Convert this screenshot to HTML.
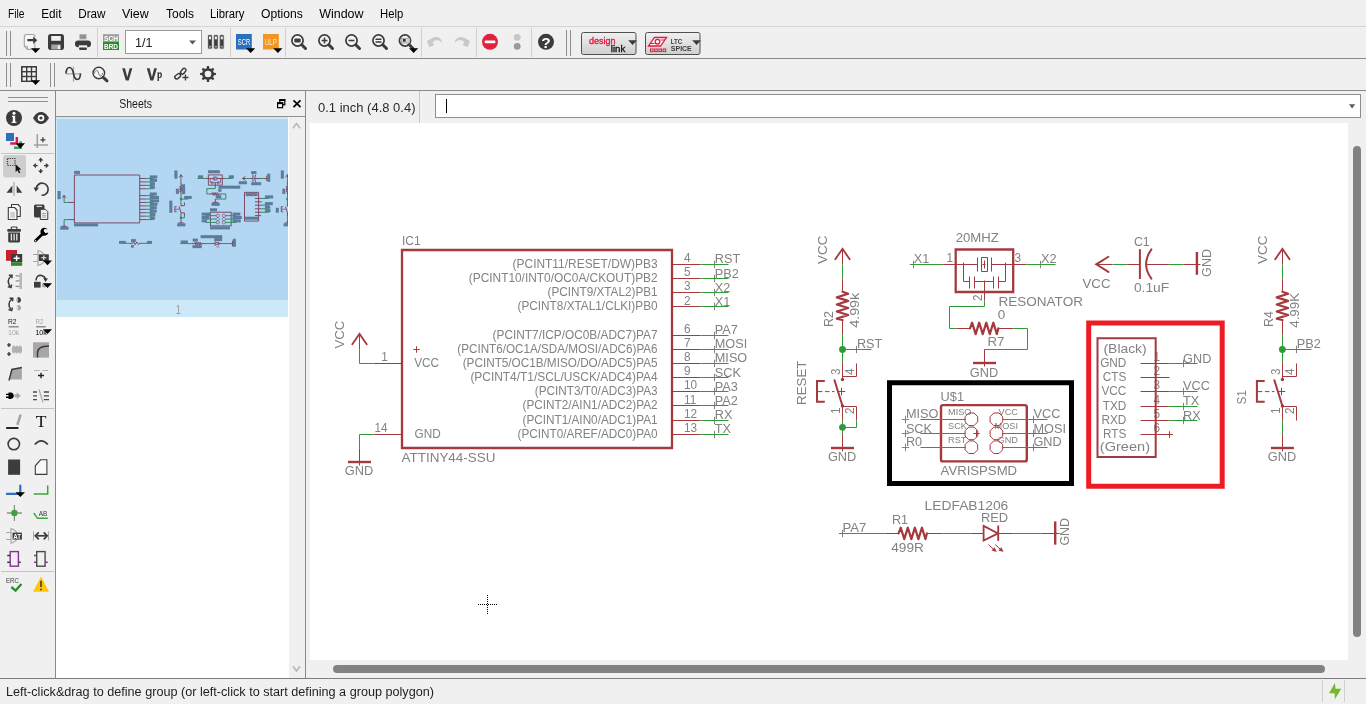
<!DOCTYPE html>
<html><head><meta charset="utf-8">
<style>
*{box-sizing:border-box;margin:0;padding:0}
html,body{width:1366px;height:704px;overflow:hidden;background:#f0f0f0;font-family:"Liberation Sans",sans-serif;}
.abs{position:absolute}
.hl{position:absolute;height:1px;left:0;width:1366px}
.vl{position:absolute;width:1px}
.menu{position:absolute;top:6px;font-size:13px;color:#000;white-space:nowrap;line-height:15px}
.ui{position:absolute;white-space:nowrap}
svg{position:absolute;overflow:visible;will-change:transform}
</style></head><body>
<!-- MENU -->
<!-- separators -->
<div class="hl" style="top:26px;background:#d4d4d4"></div>
<div class="hl" style="top:58px;background:#8a8a8a"></div>
<div class="hl" style="top:90px;background:#8a8a8a"></div>
<div class="hl" style="top:678px;background:#7e7e7e"></div>
<!-- left toolbar border -->
<div class="vl" style="left:55px;top:91px;height:587px;background:#8a8a8a"></div>
<!-- sheets panel -->
<div class="abs" style="left:56px;top:91px;width:249px;height:587px;background:#f0f0f0"></div>
<div class="vl" style="left:305px;top:91px;height:587px;background:#8a8a8a"></div>
<div class="hl" style="top:116px;left:56px;width:249px;background:#909090"></div>
<div class="abs" style="left:56px;top:117px;width:233px;height:561px;background:#fff"></div>
<div class="abs" style="left:56px;top:117px;width:232px;height:200px;background:#cde8f9"></div>
<div class="abs" style="left:57px;top:119px;width:231px;height:181px;background:#b3d7f3"></div>
<div class="abs" style="left:289px;top:117px;width:16px;height:561px;background:#f0f0f0"></div>
<!-- coord + cmd -->
<div class="vl" style="left:419px;top:91px;height:32px;background:#c8c8c8"></div>
<div class="abs" style="left:435px;top:94px;width:926px;height:24px;background:#fff;border:1px solid #8e8e8e"></div>
<div class="vl" style="left:446px;top:99px;height:14px;background:#000"></div>
<!-- canvas -->
<div class="abs" style="left:310px;top:123px;width:1038px;height:537px;background:#fff"></div>
<!-- scrollbars -->
<div class="abs" style="left:1353px;top:146px;width:8px;height:491px;background:#828282;border-radius:4px"></div>
<div class="abs" style="left:333px;top:665px;width:992px;height:8px;background:#828282;border-radius:4px"></div>
<!-- status -->
<div class="vl" style="left:1322px;top:680px;height:22px;background:#d0d0d0"></div>
<div class="vl" style="left:1344px;top:680px;height:22px;background:#d0d0d0"></div>
<svg id="chrome" style="left:0;top:0" width="1366" height="704" viewBox="0 0 1366 704" font-family="Liberation Sans, sans-serif">
<g font-size="12.5" fill="#000">
<text x="8" y="17.5" textLength="16.5" lengthAdjust="spacingAndGlyphs">File</text>
<text x="41.2" y="17.5" textLength="20.3" lengthAdjust="spacingAndGlyphs">Edit</text>
<text x="78.2" y="17.5" textLength="27.3" lengthAdjust="spacingAndGlyphs">Draw</text>
<text x="122" y="17.5" textLength="26.8" lengthAdjust="spacingAndGlyphs">View</text>
<text x="166" y="17.5" textLength="28.0" lengthAdjust="spacingAndGlyphs">Tools</text>
<text x="210" y="17.5" textLength="34.5" lengthAdjust="spacingAndGlyphs">Library</text>
<text x="261" y="17.5" textLength="41.8" lengthAdjust="spacingAndGlyphs">Options</text>
<text x="319.2" y="17.5" textLength="44.3" lengthAdjust="spacingAndGlyphs">Window</text>
<text x="380" y="17.5" textLength="23.2" lengthAdjust="spacingAndGlyphs">Help</text>
</g>
<g id="tb1">
<!-- grips -->
<path d="M6.5 31V56M10.5 31V56M566.5 30V56M570.5 30V56" stroke="#8e8e8e" stroke-width="1" fill="none"/>
<!-- light separators -->
<path d="M97.5 28V57M230.5 28V57M285.5 28V57M421.5 28V57M476.5 28V57M531.5 28V57" stroke="#cfcfcf" stroke-width="1" fill="none"/>
<!-- open icon -->
<path d="M26.800 34.500H32.800Q34.800 34.500 34.800 36.500V49.400H27.500L24.300 46.300V37Q24.300 34.500 26.800 34.500Z" fill="#f6f6f6" stroke="#a2a2a2" stroke-width="1.100"/>
<path d="M24.300 46.300H27.500V49.400" fill="none" stroke="#a2a2a2" stroke-width="0.900"/>
<rect x="33.800" y="37.400" width="2.400" height="5.800" fill="#f0f0f0"/>
<path d="M27.400 39.100H33.200V36.500L37.300 40.200L33.200 43.900V41.300H27.400Z" fill="#3c3c3c"/>
<path d="M31 48.200H40.200L35.600 53Z" fill="#000"/>
<!-- save icon -->
<rect x="48" y="34" width="16" height="16" rx="2.800" fill="#3c3c3c"/>
<rect x="51.200" y="36" width="9.600" height="4.800" fill="#f0f0f0"/>
<rect x="51.200" y="44.500" width="9.600" height="5" fill="#a8a4a4"/>
<rect x="57.800" y="45.400" width="2.100" height="3.600" fill="#f2f2f2"/>
<!-- print icon -->
<rect x="79.400" y="34.200" width="7.100" height="5.200" fill="#a6a6a6"/>
<path d="M80.200 35.800H85.700M80.200 37.600H85.700" stroke="#787878" stroke-width="0.800"/>
<rect x="75" y="40.400" width="16" height="6.800" rx="3.200" fill="#3c3c3c"/>
<rect x="78.800" y="45.300" width="8.400" height="2.600" fill="#f0f0f0"/>
<rect x="79.100" y="47.600" width="7.800" height="2.300" rx="1" fill="#3c3c3c"/>
<!-- SCH/BRD -->
<rect x="103" y="34.200" width="16" height="7.600" fill="#9c9c9c"/>
<rect x="103" y="41.800" width="16" height="8.200" fill="#2c8c2c"/>
<text x="104" y="41" font-size="7.4" font-weight="bold" fill="#fff" textLength="14" lengthAdjust="spacingAndGlyphs">SCH</text>
<text x="104" y="49.2" font-size="7.4" font-weight="bold" fill="#fff" textLength="14" lengthAdjust="spacingAndGlyphs">BRD</text>
<!-- combo -->
<rect x="125.5" y="30.5" width="76" height="23" fill="#fff" stroke="#9a9a9a"/>
<text x="135" y="47" font-size="13" fill="#222" textLength="17.5" lengthAdjust="spacingAndGlyphs">1/1</text>
<path d="M189 40.5H196L192.500 44.500Z" fill="#5a5a5a"/>
<!-- library books -->
<g fill="#3c3c3c" stroke="#a8a8a8" stroke-width="0.500">
<rect x="208" y="35" width="4" height="13.800" rx="0.800"/><rect x="213.900" y="35" width="4" height="13.800" rx="0.800"/><rect x="219.800" y="35" width="4" height="13.800" rx="0.800"/>
</g>
<g fill="#f4f4f4"><rect x="209" y="36.500" width="2" height="2.800"/><rect x="214.900" y="36.500" width="2" height="2.800"/><rect x="220.800" y="36.500" width="2" height="2.800"/></g>
<g fill="#9a9a9a"><rect x="209" y="45.800" width="2" height="1.800"/><rect x="214.900" y="45.800" width="2" height="1.800"/><rect x="220.800" y="45.800" width="2" height="1.800"/></g>
<!-- SCR -->
<rect x="236" y="34" width="15.800" height="15.500" fill="#2b70be"/>
<text x="237.800" y="45.100" font-size="9.200" fill="#fff" textLength="12.500" lengthAdjust="spacingAndGlyphs">SCR</text>
<path d="M246 48.200H255.200L250.600 53Z" fill="#000"/>
<!-- ULP -->
<rect x="263" y="34" width="15.800" height="15.500" fill="#f5941e"/>
<text x="264.800" y="45.100" font-size="9.200" fill="#ffe9c8" textLength="12" lengthAdjust="spacingAndGlyphs">ULP</text>
<path d="M273.300 48.200H282.500L277.900 53Z" fill="#000"/>
<!-- zoom icons -->
<g id="mag" fill="none" stroke="#3c3c3c">
<circle cx="297.500" cy="40.500" r="5.600" stroke-width="1.700" fill="#f6f6f6"/>
<path d="M301.800 44.800L305.500 48.500" stroke-width="3" stroke-linecap="round"/>
</g>
<rect x="294.300" y="38.500" width="6.400" height="4" rx="1" fill="#3c3c3c"/>
<use href="#mag" x="27"/><path d="M321.500 40.500H327.500M324.500 37.500V43.500" stroke="#3c3c3c" stroke-width="1.600"/>
<use href="#mag" x="54"/><path d="M348.500 40.500H354.500" stroke="#3c3c3c" stroke-width="1.600"/>
<use href="#mag" x="81"/><path d="M375.500 39.200H381.500M375.500 41.900H381.500" stroke="#3c3c3c" stroke-width="1.500"/>
<use href="#mag" x="107.500"/><rect x="401.300" y="38.200" width="8.600" height="4.800" fill="#d4d4d4" stroke="#8a8a8a" stroke-width="0.700"/><rect x="403" y="39" width="2.600" height="2.600" fill="#2a2a2a"/>
<path d="M409 48.200H418.200L413.600 53Z" fill="#000"/>
<!-- undo / redo -->
<path d="M427 40.800L430.400 39.300Q433 36.800 436.500 37Q441 37.500 442.500 42.900Q439.800 40 436.400 39.900Q434.300 40.200 432.600 42.300L434.300 44.900L429.200 47.300Z" fill="#c9c9c9"/>
<path d="M469.900 40.800L466.500 39.300Q463.900 36.800 460.400 37.000Q455.900 37.500 454.400 42.900Q457.100 40.000 460.500 39.900Q462.600 40.200 464.300 42.300L462.600 44.900L467.700 47.300Z" fill="#c9c9c9"/>
<!-- stop -->
<circle cx="490" cy="41.800" r="8" fill="#e2213d"/>
<rect x="484.700" y="40.400" width="10.600" height="2.800" rx="0.800" fill="#fff"/>
<!-- dots -->
<circle cx="517.200" cy="37.300" r="3.400" fill="#c6c6c6"/><circle cx="517.200" cy="46.300" r="3.400" fill="#9a9a9a"/>
<!-- help -->
<circle cx="546" cy="41.800" r="8" fill="#3c3c3c"/>
<text x="541.300" y="48.300" font-size="15.500" font-weight="bold" fill="#fff">?</text>
<!-- designlink button -->
<defs><linearGradient id="bg" x1="0" y1="0" x2="0" y2="1"><stop offset="0" stop-color="#f0f0f0"/><stop offset="1" stop-color="#cfcfcf"/></linearGradient></defs>
<rect x="581.500" y="32.500" width="54.500" height="22" rx="2" fill="url(#bg)" stroke="#505050"/>
<text x="589" y="43.500" font-size="9.800" fill="#e2173f" stroke="#e2173f" stroke-width="0.350" textLength="26.500" lengthAdjust="spacingAndGlyphs">design</text>
<text x="610.800" y="51.600" font-size="9.800" fill="#111" stroke="#111" stroke-width="0.350" textLength="14.500" lengthAdjust="spacingAndGlyphs">link</text>
<path d="M628.200 40.200H637L632.600 45Z" fill="#3c3c3c"/>
<!-- ltspice button -->
<rect x="645.500" y="32.500" width="54.500" height="22" rx="2" fill="url(#bg)" stroke="#505050"/>
<path d="M654.500 37.500H666.500L660.500 46H648.500Z" fill="#fff" stroke="#e2173f" stroke-width="1.300"/>
<circle cx="657.500" cy="41.700" r="2.300" fill="none" stroke="#e2173f" stroke-width="1.300"/>
<path d="M650 43.500H654.500M660.500 40H665" stroke="#e2173f" stroke-width="1.200"/>
<g fill="none" stroke="#e2173f" stroke-width="1"><rect x="650.500" y="49" width="2.600" height="2.600"/><rect x="654.700" y="49" width="2.600" height="2.600"/><rect x="658.900" y="49" width="2.600" height="2.600"/><rect x="663.100" y="49" width="2.600" height="2.600"/></g>
<text x="670.800" y="43.800" font-size="6.800" font-weight="bold" fill="#3c3c3c" textLength="11.500" lengthAdjust="spacingAndGlyphs">LTC</text>
<text x="670.800" y="51.200" font-size="6.800" font-weight="bold" fill="#3c3c3c" textLength="21" lengthAdjust="spacingAndGlyphs">SPICE</text>
<path d="M692.200 40.200H701L696.600 45Z" fill="#3c3c3c"/>
</g>
<!--TB1END-->
<g id="tb2">
<path d="M6.500 63V87M10.500 63V87M50.500 63V87M54.500 63V87" stroke="#8e8e8e" stroke-width="1" fill="none"/>
<!-- grid icon -->
<rect x="21" y="66" width="16" height="16" fill="#3c3c3c"/>
<g fill="#f0f0f0"><rect x="22.600" y="67.600" width="3.400" height="3.400"/><rect x="27.400" y="67.600" width="3.400" height="3.400"/><rect x="32.200" y="67.600" width="3.400" height="3.400"/>
<rect x="22.600" y="72.400" width="3.400" height="3.400"/><rect x="27.400" y="72.400" width="3.400" height="3.400"/><rect x="32.200" y="72.400" width="3.400" height="3.400"/>
<rect x="22.600" y="77.200" width="3.400" height="3.400"/><rect x="27.400" y="77.200" width="3.400" height="3.400"/><rect x="32.200" y="77.200" width="3.400" height="3.400"/></g>
<path d="M31 80.200H40.200L35.600 85Z" fill="#000"/>
<!-- sine -->
<path d="M73.500 66.500V82M66 73.800H81" stroke="#a8a8a8" stroke-width="1.200" fill="none"/>
<path d="M66 73.500C66.500 65.500 72 65.500 73.500 73.500C75 81.500 80 81.500 80.500 73.500" stroke="#3c3c3c" stroke-width="1.700" fill="none"/>
<!-- mag sine -->
<circle cx="98.800" cy="73" r="5.800" fill="#f4f4f4" stroke="#3c3c3c" stroke-width="1.400"/>
<path d="M94.500 73.500C95 69.500 97.800 69.500 98.600 73.200C99.400 77 102 77 102.700 73" stroke="#707070" stroke-width="1" fill="none"/>
<path d="M103.200 77.400L107 80.800" stroke="#3c3c3c" stroke-width="3" stroke-linecap="round"/>
<!-- V -->
<path d="M122.200 68.300H125L127.300 77.200L129.600 68.300H132.300L128.700 80.500H125.800Z" fill="#3c3c3c"/>
<!-- Vp -->
<path d="M146.800 68.300H149.600L151.900 77.200L154.200 68.300H156.900L153.300 80.500H150.400Z" fill="#3c3c3c"/>
<path d="M157.500 72.300H159V73Q159.600 72.200 160.500 72.300Q162 72.500 162 75.300Q162 78 160.400 78.100Q159.600 78.100 159 77.500V81H157.500ZM159 74V76.500Q159.400 77 159.800 77Q160.600 77 160.600 75.200Q160.600 73.500 159.800 73.500Q159.300 73.500 159 74Z" fill="#3c3c3c"/>
<!-- link plus -->
<g fill="none" stroke="#3c3c3c" stroke-width="1.500">
<rect x="-3.200" y="-1.800" width="6.400" height="3.600" rx="1.800" transform="translate(177.700 76.300) rotate(-38)"/>
<rect x="-3.200" y="-1.800" width="6.400" height="3.600" rx="1.800" transform="translate(183.300 71.200) rotate(-50)"/>
<path d="M179.800 74.600L181.500 73"/>
<path d="M182.500 77.500H188.400M185.450 74.600V80.400" stroke-width="1.300"/>
</g>
<path d="M213.87 72.74L215.93 72.94L215.93 75.06L213.87 75.26L213.04 77.25L214.36 78.85L212.85 80.36L211.25 79.04L209.26 79.87L209.06 81.93L206.94 81.93L206.74 79.87L204.75 79.04L203.15 80.36L201.64 78.85L202.96 77.25L202.13 75.26L200.07 75.06L200.07 72.94L202.13 72.74L202.96 70.75L201.64 69.15L203.15 67.64L204.75 68.96L206.74 68.13L206.94 66.07L209.06 66.07L209.26 68.13L211.25 68.96L212.85 67.64L214.36 69.15L213.04 70.75Z M211.3 74A3.3 3.3 0 1 0 204.7 74A3.3 3.3 0 1 0 211.3 74Z" fill="#3c3c3c" fill-rule="evenodd"/>
</g>
<!--TB2END-->
<g id="lefttb">
<path d="M8 97.500H48M8 101.500H48" stroke="#8e8e8e" stroke-width="1" fill="none"/>
<path d="M1 153.500H54M1 408.500H54M1 571.500H54" stroke="#c4c4c4" stroke-width="1" fill="none"/>
<!-- info -->
<circle cx="14" cy="118" r="8" fill="#3c3c3c"/>
<circle cx="14" cy="113.300" r="1.500" fill="#fff"/>
<path d="M12 115.800H15.200V121.800H16.400V123H11.600V121.800H12.800V117H12Z" fill="#fff"/>
<!-- eye -->
<path d="M33 118C35.500 113.500 38.500 112 41 112C43.500 112 46.500 113.500 49 118C46.500 122.500 43.500 124 41 124C38.500 124 35.500 122.500 33 118Z" fill="#3c3c3c"/>
<circle cx="41" cy="118" r="3.300" fill="#fff"/><circle cx="41" cy="118" r="1.600" fill="#3c3c3c"/>
<!-- layers -->
<path d="M14 146.500H21.900V141.200H19.400V146.500ZM14 146.500V149H21.900V146.500Z" fill="#2ca85c"/>
<path d="M10.200 142.200H18.100V137H15.600V142.200ZM10.200 142.200V144.800H18.100V142.200Z" fill="#d81b60"/>
<rect x="6" y="133" width="8" height="8" fill="#2b70be"/>
<path d="M15.600 143.200H25L20.300 148.400Z" fill="#000"/>
<!-- mark -->
<path d="M37.300 134V148M34 145H48" stroke="#a0a0a0" stroke-width="1.500" fill="none"/>
<path d="M40.400 139.800H45.400M42.900 137.300V142.300" stroke="#3c3c3c" stroke-width="1.300" fill="none"/>
<!-- group (selected) -->
<rect x="3" y="155" width="23" height="22.600" rx="2.500" fill="#cdcdcd"/>
<rect x="7.500" y="158.500" width="7.500" height="7" fill="none" stroke="#3c3c3c" stroke-width="1.200" stroke-dasharray="1.200 1.100"/>
<path d="M15.600 164.200V172L17.500 170.300L19 173.300L20.300 172.700L18.900 169.700L21.300 169.500Z" fill="#111"/>
<!-- move -->
<g fill="#3c3c3c"><path d="M40.700 157.600L43.300 160.600H38.100Z"/><path d="M40.700 173.600L43.300 170.600H38.100Z"/><path d="M32.900 165.600L35.900 163V168.200Z"/><path d="M48.900 165.600L45.900 163V168.200Z"/>
<rect x="40" y="160" width="1.400" height="2.200"/><rect x="40" y="169" width="1.400" height="2.200"/><rect x="35.500" y="164.900" width="2.200" height="1.400"/><rect x="44" y="164.900" width="2.200" height="1.400"/></g>
<!-- mirror -->
<path d="M14 182V196" stroke="#b4b4b4" stroke-width="1.500"/>
<path d="M12.300 185.500V192.700H6.500ZM16.700 185.500V192.700H22.300Z" fill="#3c3c3c"/>
<!-- rotate -->
<path d="M36.200 188.500A6 6 0 1 1 41.600 195.200" fill="none" stroke="#3c3c3c" stroke-width="1.700"/>
<path d="M33.600 187.500L39 187.800L35.800 191.800Z" fill="#3c3c3c"/>
<!-- copy -->
<path d="M11.500 204.500H18L20.300 206.800V216.500H11.500Z" fill="#f6f6f6" stroke="#3c3c3c" stroke-width="1.100" stroke-linejoin="round"/>
<path d="M8.300 207.500H14.500L17 210V219.500H8.300Z" fill="#f6f6f6" stroke="#3c3c3c" stroke-width="1.100" stroke-linejoin="round"/>
<path d="M10.300 213H15M10.300 215H15M10.300 217H15" stroke="#a0a0a0" stroke-width="0.900"/>
<!-- paste -->
<rect x="34" y="204.500" width="10.500" height="13" rx="1.500" fill="#3c3c3c"/>
<rect x="36.500" y="205.800" width="5.500" height="1.300" fill="#d0d0d0"/>
<path d="M40.300 209.300H45.500L47.800 211.600V219.500H40.300Z" fill="#ededed" stroke="#3c3c3c" stroke-width="1"/>
<path d="M42 213.500H46M42 215.300H46M42 217.100H46" stroke="#a0a0a0" stroke-width="0.900"/>
<!-- trash -->
<rect x="11.300" y="227" width="5.600" height="2.600" rx="0.800" fill="none" stroke="#3c3c3c" stroke-width="1.200"/>
<rect x="7.200" y="229" width="13.800" height="2.800" rx="1" fill="#3c3c3c"/>
<path d="M8.200 232.600H20V241Q20 242.600 18.400 242.600H9.800Q8.200 242.600 8.200 241Z" fill="#3c3c3c"/>
<path d="M11.400 233.800V240.600M14.100 233.800V240.600M16.800 233.800V240.600" stroke="#e8e8e8" stroke-width="1.300"/>
<!-- wrench -->
<path d="M35.500 240.800L43.500 233" stroke="#000" stroke-width="2.800" stroke-linecap="round"/>
<path d="M47.600 229.400A4 4 0 1 0 48.300 232.600L45.300 233.200L43.600 231.300L44.600 228.800Z" fill="#000"/>
<circle cx="35.600" cy="240.700" r="0.700" fill="#f0f0f0"/>
<!-- add part -->
<rect x="6" y="250" width="11" height="10.800" fill="#c8202f"/>
<rect x="11" y="254" width="11.200" height="8.300" fill="#3c3c3c"/>
<rect x="11" y="262.300" width="11.200" height="3.500" fill="#2c8c2c"/>
<path d="M13.600 258.200H19.600M16.600 255.400V261" stroke="#fff" stroke-width="1.500"/>
<!-- add gate -->
<path d="M33 254.500H38M33 261.500H38M38 250.500V265.500Q45 263.500 45 258Q45 252.500 38 250.500Z" fill="none" stroke="#a4a4a4" stroke-width="1.200"/>
<rect x="38.800" y="254.300" width="10" height="6.700" fill="#3c3c3c"/>
<path d="M41.300 257.700H46.300M43.800 255.400V260" stroke="#d8d8d8" stroke-width="1.300"/>
<path d="M43 260.600H52L47.500 265.200Z" fill="#000"/>
<!-- replace -->
<g fill="none" stroke="#3c3c3c" stroke-width="1.500">
<path d="M11.500 275.500Q5.500 281 10.500 286.800"/><path d="M8.800 275.300H12V278.300"/><path d="M7.800 286.500L11 287.600L11.700 284.500"/></g>
<rect x="19.400" y="273" width="2.600" height="16" fill="#b8b8b8"/>
<path d="M15.600 275.800H19.400M15.600 280.800H19.400M15.600 286.400H19.400" stroke="#8c8c8c" stroke-width="1.200"/>
<!-- lock/rotate -->
<rect x="34" y="281.800" width="6.600" height="5.800" fill="#3c3c3c"/>
<path d="M36 280.500Q36.500 274.500 41.500 275.500Q45 276.300 45.600 279.500" fill="none" stroke="#3c3c3c" stroke-width="1.600"/>
<path d="M43.200 278L48 278.500L45.500 282Z" fill="#3c3c3c"/>
<circle cx="44.300" cy="285.200" r="2.400" fill="#a0a0a0"/>
<path d="M43 283.200H52L47.500 288Z" fill="#000"/>
<!-- replace2 -->
<g fill="none" stroke="#3c3c3c" stroke-width="1.500">
<path d="M12.200 298.500Q6.200 304 11.200 309.800"/><path d="M9.500 298.300H12.700V301.300"/><path d="M8.500 309.500L11.700 310.600L12.400 307.500"/></g>
<path d="M17.500 297.200A2.800 2.800 0 1 1 17.500 302.600Q19 300 17.500 297.200Z" fill="#3c3c3c"/>
<path d="M17.500 305A2.800 2.800 0 1 1 17.500 310.400Q19 307.800 17.500 305Z" fill="#a4a4a4"/>
<path d="M16.500 299H17.800M16.500 301H17.800" stroke="#3c3c3c" stroke-width="0.800"/><path d="M16.500 306.800H17.800M16.500 308.800H17.800" stroke="#a4a4a4" stroke-width="0.800"/>
<!-- name -->
<text x="8" y="324.300" font-size="7" fill="#222" textLength="8.500" lengthAdjust="spacingAndGlyphs">R2</text>
<rect x="8.700" y="326" width="10" height="1.500" fill="#8c8c8c"/>
<text x="8" y="334.500" font-size="7" fill="#a8a8a8" textLength="11.400" lengthAdjust="spacingAndGlyphs">10k</text>
<!-- value -->
<text x="35.400" y="324.300" font-size="7" fill="#a8a8a8" textLength="8" lengthAdjust="spacingAndGlyphs">R2</text>
<rect x="36.200" y="326" width="9.500" height="1.500" fill="#8c8c8c"/>
<text x="35.400" y="334.500" font-size="7" fill="#000" textLength="11.400" lengthAdjust="spacingAndGlyphs">10k</text>
<path d="M43 329.300H52L47.500 334Z" fill="#000"/>
<!-- smash -->
<path d="M12 346.500H13.200V345.500H14.700V346.500H16.200V345.500H17.700V346.500H19.200V345.500H20.700V346.500H22V352.500H20.700V353.500H19.200V352.500H17.700V353.500H16.200V352.500H14.700V353.500H13.200V352.500H12Z" fill="#b4b0b0"/>
<path d="M7 345H11M9 343V347M7 354H11M9 352V356" stroke="#222" stroke-width="1.200"/>
<!-- miter -->
<rect x="33" y="342.300" width="16" height="15.300" fill="#aaa6a6"/>
<path d="M37.500 357.600V353Q37.500 346 49 346" fill="none" stroke="#3c3c3c" stroke-width="1.500"/>
<!-- split -->
<path d="M11.900 369.500L21.900 367.600V379.500H9Z" fill="#aaa6a6"/>
<path d="M9 380.500L11.900 369.500L21.900 367.600" fill="none" stroke="#3c3c3c" stroke-width="1.500"/>
<!-- invoke -->
<path d="M34 370.500H39.700M42.500 370.500H48" stroke="#b4b4b4" stroke-width="1.200"/>
<path d="M38 375.500H44M41 372.700V378.300" stroke="#222" stroke-width="1.400"/>
<!-- pinswap -->
<path d="M6 393.700H8.500V392.600H10.800Q13.600 393 13.800 395.800Q13.600 398.600 10.800 399H8.500V397.900H6V396.500H8.500V395.100H6Z" fill="#000"/>
<path d="M14.500 394.300H16.800V392.300L20.800 395.800L16.800 399.300V397.300H14.500Z" fill="#a8a8a8"/>
<!-- gateswap -->
<path d="M33 392H37M33 395.800H37M33 399.700H37M43.800 392H49M43.800 395.800H49M43.800 399.700H49" stroke="#4a4a4a" stroke-width="1.300"/>
<path d="M39 389.300L43 402.600" stroke="#a8a8a8" stroke-width="1.200"/>
<!-- line -->
<path d="M6.200 428H18.500" stroke="#000" stroke-width="1.700"/>
<path d="M17.400 424.800L20.600 414.600" stroke="#a4a4a4" stroke-width="2.600"/>
<!-- T -->
<text x="35.800" y="426.800" font-family="Liberation Serif, serif" font-size="17.500" fill="#111">T</text>
<!-- circle -->
<circle cx="13.800" cy="444.100" r="5.700" fill="none" stroke="#3c3c3c" stroke-width="1.600"/>
<!-- arc -->
<path d="M34.800 444.500Q41.300 437.200 47.800 444.500" fill="none" stroke="#3c3c3c" stroke-width="1.800"/>
<!-- rect -->
<rect x="8.100" y="459.500" width="12" height="15.300" fill="#3c3c3c"/>
<!-- polygon -->
<path d="M35.300 474.400V465.800L40.600 459.800H46.900V474.400Z" fill="#f8f8f8" stroke="#3c3c3c" stroke-width="1.100"/>
<!-- bus -->
<path d="M6.900 493.900H18M20.300 485.700V492.500" stroke="#2b70be" stroke-width="2.200" stroke-linecap="round"/>
<path d="M15.600 492.300H25L20.300 497Z" fill="#000"/>
<!-- net -->
<path d="M33.800 493.900H47.700V485.500" fill="none" stroke="#3aa53a" stroke-width="1.500"/>
<!-- junction -->
<path d="M6.900 513H21.900M14.400 505V521" stroke="#8e8e8e" stroke-width="1.300"/>
<circle cx="14.400" cy="513" r="3.200" fill="#3aa53a"/>
<!-- label -->
<text x="38.700" y="515.600" font-size="7.200" fill="#333" textLength="8.600" lengthAdjust="spacingAndGlyphs">AB</text>
<path d="M33.800 513L37.500 518.300H47.800" fill="none" stroke="#3aa53a" stroke-width="1.400"/>
<!-- attribute -->
<path d="M6.200 532.500H11M6.200 539.500H11M11 528.500V543.300Q17.500 541.500 17.500 536Q17.500 530.500 11 528.500Z" fill="none" stroke="#a4a4a4" stroke-width="1.100"/>
<rect x="12.500" y="532.600" width="9.400" height="7" fill="#3c3c3c"/>
<text x="13.300" y="538.800" font-size="6.500" font-weight="bold" fill="#fff" textLength="7.800" lengthAdjust="spacingAndGlyphs">AT</text>
<!-- dimension -->
<path d="M33.500 531.400V540.500M48.500 531.400V540.500" stroke="#a8a8a8" stroke-width="1"/>
<path d="M36.500 535.800H46" stroke="#3c3c3c" stroke-width="1.700"/>
<path d="M38.800 532.300L35.300 535.800L38.800 539.300M43.700 532.300L47.200 535.800L43.700 539.300" fill="none" stroke="#3c3c3c" stroke-width="1.700"/>
<!-- module -->
<rect x="10.200" y="551.600" width="8.200" height="14.600" fill="none" stroke="#8a2d9a" stroke-width="1.400"/>
<path d="M7.200 555.500H10M7.200 562.300H10M18.600 562.300H20.700" stroke="#3c3c3c" stroke-width="1.500"/>
<!-- port -->
<rect x="36.700" y="551.600" width="8.400" height="14.600" fill="none" stroke="#4a4a4a" stroke-width="1.400"/>
<path d="M34 555.500H36.300M34 562.300H36.300M45.500 562.300H47.800" stroke="#8a2d9a" stroke-width="1.500"/>
<!-- ERC -->
<text x="6" y="582.800" font-size="8" fill="#3c3c3c" textLength="12.800" lengthAdjust="spacingAndGlyphs">ERC</text>
<path d="M11.300 587L15.600 590.600L21.400 584" fill="none" stroke="#2c8c2c" stroke-width="2.300"/>
<!-- warn -->
<path d="M41 576.400L49 591.800H33.100Z" fill="#ffc60a"/>
<path d="M41 580.700V587" stroke="#3c3c3c" stroke-width="1.600"/><circle cx="41" cy="589.500" r="0.900" fill="#3c3c3c"/>
</g>
<!--LEFTEND-->
<g id="thumb" clip-path="url(#thclip)"><defs><clipPath id="thclip"><rect x="57" y="118" width="231" height="182"/></clipPath></defs>
<path d="M74.38 175L139.72 175L139.72 222.92L74.38 222.92Z" stroke="#7c4a68" stroke-width="1.0" fill="none"/>
<path d="M139.72 178.48L146.57 178.48" stroke="#7c4a68" stroke-width="1.0" fill="none"/>
<path d="M146.57 178.48L153.45 178.48" stroke="#2e8f5c" stroke-width="1.0" fill="none"/>
<rect x="149.78" y="175.37" width="7.55" height="3.07" fill="#5b7d9b"/>
<path d="M139.72 181.91L146.57 181.91" stroke="#7c4a68" stroke-width="1.0" fill="none"/>
<path d="M146.57 181.91L153.45 181.91" stroke="#2e8f5c" stroke-width="1.0" fill="none"/>
<rect x="149.78" y="178.8" width="7.21" height="3.07" fill="#5b7d9b"/>
<path d="M139.72 185.33L146.57 185.33" stroke="#7c4a68" stroke-width="1.0" fill="none"/>
<path d="M146.57 185.33L153.45 185.33" stroke="#2e8f5c" stroke-width="1.0" fill="none"/>
<rect x="149.78" y="182.22" width="5.16" height="3.07" fill="#5b7d9b"/>
<path d="M139.72 188.76L146.57 188.76" stroke="#7c4a68" stroke-width="1.0" fill="none"/>
<path d="M146.57 188.76L153.45 188.76" stroke="#2e8f5c" stroke-width="1.0" fill="none"/>
<rect x="149.78" y="185.65" width="5.16" height="3.07" fill="#5b7d9b"/>
<path d="M139.72 195.61L146.57 195.61" stroke="#7c4a68" stroke-width="1.0" fill="none"/>
<path d="M146.57 195.61L153.45 195.61" stroke="#2e8f5c" stroke-width="1.0" fill="none"/>
<rect x="149.78" y="192.49" width="6.98" height="3.07" fill="#5b7d9b"/>
<path d="M139.72 199.03L146.57 199.03" stroke="#7c4a68" stroke-width="1.0" fill="none"/>
<path d="M146.57 199.03L153.45 199.03" stroke="#2e8f5c" stroke-width="1.0" fill="none"/>
<rect x="149.78" y="195.92" width="9.25" height="3.07" fill="#5b7d9b"/>
<path d="M139.72 202.45L146.57 202.45" stroke="#7c4a68" stroke-width="1.0" fill="none"/>
<path d="M146.57 202.45L153.45 202.45" stroke="#2e8f5c" stroke-width="1.0" fill="none"/>
<rect x="149.78" y="199.34" width="9.25" height="3.07" fill="#5b7d9b"/>
<path d="M139.72 205.88L146.57 205.88" stroke="#7c4a68" stroke-width="1.0" fill="none"/>
<path d="M146.57 205.88L153.45 205.88" stroke="#2e8f5c" stroke-width="1.0" fill="none"/>
<rect x="149.78" y="202.77" width="7.72" height="3.07" fill="#5b7d9b"/>
<path d="M139.72 209.3L146.57 209.3" stroke="#7c4a68" stroke-width="1.0" fill="none"/>
<path d="M146.57 209.3L153.45 209.3" stroke="#2e8f5c" stroke-width="1.0" fill="none"/>
<rect x="149.78" y="206.19" width="6.98" height="3.07" fill="#5b7d9b"/>
<path d="M139.72 212.73L146.57 212.73" stroke="#7c4a68" stroke-width="1.0" fill="none"/>
<path d="M146.57 212.73L153.45 212.73" stroke="#2e8f5c" stroke-width="1.0" fill="none"/>
<rect x="149.78" y="209.62" width="6.98" height="3.07" fill="#5b7d9b"/>
<path d="M139.72 216.15L146.57 216.15" stroke="#7c4a68" stroke-width="1.0" fill="none"/>
<path d="M146.57 216.15L153.45 216.15" stroke="#2e8f5c" stroke-width="1.0" fill="none"/>
<rect x="149.78" y="213.04" width="5.67" height="3.07" fill="#5b7d9b"/>
<path d="M139.72 219.58L146.57 219.58" stroke="#7c4a68" stroke-width="1.0" fill="none"/>
<path d="M146.57 219.58L153.45 219.58" stroke="#2e8f5c" stroke-width="1.0" fill="none"/>
<rect x="149.78" y="216.46" width="5.33" height="3.07" fill="#5b7d9b"/>
<path d="M67.54 202.44L74.38 202.44" stroke="#7c4a68" stroke-width="1.0" fill="none"/>
<path d="M64.1 202.44L67.54 202.44" stroke="#2e8f5c" stroke-width="1.0" fill="none"/>
<path d="M67.54 219.6L74.38 219.6" stroke="#7c4a68" stroke-width="1.0" fill="none"/>
<path d="M64.1 219.6L67.54 219.6" stroke="#2e8f5c" stroke-width="1.0" fill="none"/>
<rect x="74.08" y="170.84" width="5.93" height="3.05" fill="#5b7d9b"/>
<rect x="73.96" y="223.35" width="24.15" height="3.05" fill="#5b7d9b"/>
<path d="M64.1 202.44L64.1 199.05" stroke="#2e8f5c" stroke-width="1.0" fill="none"/>
<path d="M64.1 199.05L64.1 195.09" stroke="#7c4a68" stroke-width="1.0" fill="none"/>
<path d="M62.36 197.8L64.1 195.28L65.84 197.8" stroke="#7c4a68" stroke-width="1.0" fill="none"/>
<rect x="57.59" y="191.03" width="3.05" height="8.13" fill="#5b7d9b"/>
<path d="M64.1 219.6L64.1 223.11" stroke="#2e8f5c" stroke-width="1.0" fill="none"/>
<path d="M64.1 223.11L64.1 227.03" stroke="#7c4a68" stroke-width="1.0" fill="none"/>
<path d="M61.32 226.3L66.88 226.3" stroke="#7c4a68" stroke-width="1.0" fill="none"/>
<rect x="60.22" y="226.65" width="8.3" height="3.05" fill="#5b7d9b"/>
<path d="M180.98 178.51L180.98 174.52" stroke="#7c4a68" stroke-width="1.0" fill="none"/>
<path d="M179.24 177.23L180.98 174.71L182.73 177.23" stroke="#7c4a68" stroke-width="1.0" fill="none"/>
<path d="M180.98 178.51L180.98 181.95" stroke="#2e8f5c" stroke-width="1.0" fill="none"/>
<path d="M180.98 181.95L180.98 185.09" stroke="#7c4a68" stroke-width="1.0" fill="none"/>
<path d="M180.98 185.09L182.36 185.61L179.61 186.46L182.36 187.32L179.61 188.17L182.36 189.03L179.61 189.89L182.36 190.74L179.61 191.6L180.98 191.94" stroke="#7c4a68" stroke-width="1.0" fill="none"/>
<path d="M180.98 191.94L180.98 195.52" stroke="#7c4a68" stroke-width="1.0" fill="none"/>
<path d="M180.98 195.52L180.98 202.27" stroke="#2e8f5c" stroke-width="1.0" fill="none"/>
<circle cx="180.98" cy="199.08" r="1.3" fill="#2e8f5c"/>
<rect x="174.36" y="170.42" width="3.05" height="8.25" fill="#5b7d9b"/>
<rect x="175.88" y="188.66" width="3.05" height="5.25" fill="#5b7d9b"/>
<rect x="182.05" y="184.26" width="3.05" height="9.87" fill="#5b7d9b"/>
<path d="M180.98 199.08L187.91 199.08" stroke="#2e8f5c" stroke-width="1.0" fill="none"/>
<rect x="184.17" y="195.94" width="7.55" height="3.07" fill="#5b7d9b"/>
<path d="M180.98 202.27L180.98 206.34" stroke="#7c4a68" stroke-width="1.0" fill="none"/>
<path d="M184.4 202.39L184.4 205.69L180.98 205.69" stroke="#7c4a68" stroke-width="1.0" fill="none"/>
<path d="M179.05 206.51L180.98 212.75" stroke="#7c4a68" stroke-width="1.0" fill="none"/>
<path d="M180.98 212.75L180.98 216.14" stroke="#7c4a68" stroke-width="1.0" fill="none"/>
<path d="M180.98 212.85L184.4 212.85L184.4 216.14" stroke="#7c4a68" stroke-width="1.0" fill="none"/>
<path d="M176.7 206.7L174.81 206.7L174.81 211.74L176.7 211.74" stroke="#7c4a68" stroke-width="1.0" fill="none"/>
<path d="M174.81 209.27H179.05" stroke="#7c4a68" stroke-width="0.8" fill="none"/>
<rect x="169.3" y="200.64" width="3.05" height="12.17" fill="#5b7d9b"/>
<path d="M180.98 216.14L180.98 219.53" stroke="#2e8f5c" stroke-width="1.0" fill="none"/>
<path d="M184.4 216.14L184.4 217.91L180.98 217.91" stroke="#2e8f5c" stroke-width="1.0" fill="none"/>
<circle cx="180.98" cy="217.91" r="1.3" fill="#2e8f5c"/>
<path d="M180.98 219.53L180.98 223.64" stroke="#7c4a68" stroke-width="1.0" fill="none"/>
<path d="M178.2 222.92L183.77 222.92" stroke="#7c4a68" stroke-width="1.0" fill="none"/>
<rect x="177.15" y="223.31" width="8.27" height="3.05" fill="#5b7d9b"/>
<path d="M287.44 178.51L287.44 174.52" stroke="#7c4a68" stroke-width="1.0" fill="none"/>
<path d="M285.7 177.23L287.44 174.71L289.18 177.23" stroke="#7c4a68" stroke-width="1.0" fill="none"/>
<path d="M287.44 178.51L287.44 181.95" stroke="#2e8f5c" stroke-width="1.0" fill="none"/>
<path d="M287.44 181.95L287.44 185.09" stroke="#7c4a68" stroke-width="1.0" fill="none"/>
<path d="M287.44 185.09L288.82 185.61L286.06 186.46L288.82 187.32L286.06 188.17L288.82 189.03L286.06 189.89L288.82 190.74L286.06 191.6L287.44 191.94" stroke="#7c4a68" stroke-width="1.0" fill="none"/>
<path d="M287.44 191.94L287.44 195.52" stroke="#7c4a68" stroke-width="1.0" fill="none"/>
<path d="M287.44 195.52L287.44 202.27" stroke="#2e8f5c" stroke-width="1.0" fill="none"/>
<circle cx="287.44" cy="199.08" r="1.3" fill="#2e8f5c"/>
<rect x="280.81" y="170.42" width="3.05" height="8.25" fill="#5b7d9b"/>
<rect x="282.34" y="188.66" width="3.05" height="5.25" fill="#5b7d9b"/>
<rect x="288.51" y="184.26" width="3.05" height="9.87" fill="#5b7d9b"/>
<path d="M287.44 199.08L294.36 199.08" stroke="#2e8f5c" stroke-width="1.0" fill="none"/>
<rect x="290.63" y="195.94" width="7.21" height="3.07" fill="#5b7d9b"/>
<path d="M287.44 202.27L287.44 206.34" stroke="#7c4a68" stroke-width="1.0" fill="none"/>
<path d="M290.85 202.39L290.85 205.69L287.44 205.69" stroke="#7c4a68" stroke-width="1.0" fill="none"/>
<path d="M285.5 206.51L287.44 212.75" stroke="#7c4a68" stroke-width="1.0" fill="none"/>
<path d="M287.44 212.75L287.44 216.14" stroke="#7c4a68" stroke-width="1.0" fill="none"/>
<path d="M287.44 212.85L290.85 212.85L290.85 216.14" stroke="#7c4a68" stroke-width="1.0" fill="none"/>
<path d="M283.16 206.7L281.27 206.7L281.27 211.74L283.16 211.74" stroke="#7c4a68" stroke-width="1.0" fill="none"/>
<path d="M281.27 209.27H285.5" stroke="#7c4a68" stroke-width="0.8" fill="none"/>
<rect x="275.78" y="207.8" width="3.05" height="4.91" fill="#5b7d9b"/>
<path d="M287.44 216.14L287.44 219.53" stroke="#2e8f5c" stroke-width="1.0" fill="none"/>
<path d="M287.44 219.53L287.44 223.64" stroke="#7c4a68" stroke-width="1.0" fill="none"/>
<path d="M284.66 222.92L290.22 222.92" stroke="#7c4a68" stroke-width="1.0" fill="none"/>
<rect x="283.61" y="223.31" width="8.27" height="3.05" fill="#5b7d9b"/>
<rect x="208.08" y="170.21" width="11.85" height="3.05" fill="#5b7d9b"/>
<path d="M208.38 174.88L222.29 174.88L222.29 185.16L208.38 185.16Z" stroke="#7c4a68" stroke-width="1.0" fill="none"/>
<path d="M197.37 178.46L205.23 178.46" stroke="#2e8f5c" stroke-width="1.0" fill="none"/>
<path d="M205.23 178.46L213.61 178.46" stroke="#7c4a68" stroke-width="1.0" fill="none"/>
<path d="M217.02 178.46L225.59 178.46" stroke="#7c4a68" stroke-width="1.0" fill="none"/>
<path d="M225.59 178.46L232.58 178.46" stroke="#2e8f5c" stroke-width="1.0" fill="none"/>
<rect x="197.94" y="175.32" width="5.16" height="3.07" fill="#5b7d9b"/>
<rect x="228.75" y="175.32" width="5.16" height="3.07" fill="#5b7d9b"/>
<path d="M213.61 176.77L213.61 180.23" stroke="#7c4a68" stroke-width="0.8" fill="none"/>
<path d="M217.02 176.77L217.02 180.23" stroke="#7c4a68" stroke-width="0.8" fill="none"/>
<path d="M214.53 176.89L216.1 176.89L216.1 180.11L214.53 180.11Z" stroke="#7c4a68" stroke-width="0.8" fill="none"/>
<path d="M210.29 178.03L210.29 182.7L211.79 182.7" stroke="#7c4a68" stroke-width="0.8" fill="none"/>
<path d="M211.79 181.32L211.79 184.34" stroke="#7c4a68" stroke-width="0.8" fill="none"/>
<path d="M212.88 181.32L212.88 184.34" stroke="#7c4a68" stroke-width="0.8" fill="none"/>
<path d="M212.88 182.7L217.62 182.7" stroke="#7c4a68" stroke-width="0.8" fill="none"/>
<path d="M217.62 181.32L217.62 184.34" stroke="#7c4a68" stroke-width="0.8" fill="none"/>
<path d="M218.71 181.32L218.71 184.34" stroke="#7c4a68" stroke-width="0.8" fill="none"/>
<path d="M218.71 182.7L220.48 182.7L220.48 178.03" stroke="#7c4a68" stroke-width="0.8" fill="none"/>
<path d="M215.35 182.43L215.35 187.1" stroke="#7c4a68" stroke-width="1.0" fill="none"/>
<path d="M215.35 187.1L215.35 188.58L206.88 188.58L206.88 193.97L208.65 193.97" stroke="#2e8f5c" stroke-width="1.0" fill="none"/>
<path d="M208.65 193.97L211.84 193.97" stroke="#7c4a68" stroke-width="1.0" fill="none"/>
<path d="M211.84 193.97L212.35 192.59L213.21 195.35L214.07 192.59L214.92 195.35L215.78 192.59L216.63 195.35L217.49 192.59L218.35 195.35L218.69 193.97" stroke="#7c4a68" stroke-width="1.0" fill="none"/>
<path d="M218.69 193.97L222.29 193.97" stroke="#7c4a68" stroke-width="1.0" fill="none"/>
<path d="M222.29 193.97L225.8 193.97L225.8 199.03L215.35 199.03" stroke="#2e8f5c" stroke-width="1.0" fill="none"/>
<path d="M215.35 199.03L215.35 203.07" stroke="#7c4a68" stroke-width="1.0" fill="none"/>
<path d="M212.57 202.35L218.13 202.35" stroke="#7c4a68" stroke-width="1.0" fill="none"/>
<rect x="211.49" y="202.78" width="8.27" height="3.05" fill="#5b7d9b"/>
<rect x="218.41" y="185.63" width="21.87" height="3.05" fill="#5b7d9b"/>
<rect x="218.24" y="188.75" width="3.22" height="3.05" fill="#5b7d9b"/>
<rect x="215.77" y="195.26" width="5.51" height="3.05" fill="#5b7d9b"/>
<rect x="210.03" y="208.27" width="7.06" height="3.05" fill="#5b7d9b"/>
<rect x="210.42" y="212.23" width="20.76" height="13.62" fill="none" stroke="#7c4a68" stroke-width="1"/>
<path d="M205.41 215.67L216.23 215.67" stroke="#2e8f5c" stroke-width="1.0" fill="none"/>
<path d="M225.38 215.67L236.24 215.67" stroke="#2e8f5c" stroke-width="1.0" fill="none"/>
<path d="M219.3 216.3L218.41 217.2L217.15 217.2L216.25 216.3L216.25 215.04L217.15 214.15L218.41 214.15L219.3 215.04Z" stroke="#7c4a68" stroke-width="0.7" fill="none"/>
<path d="M225.35 216.3L224.46 217.2L223.2 217.2L222.3 216.3L222.3 215.04L223.2 214.15L224.46 214.15L225.35 215.04Z" stroke="#7c4a68" stroke-width="0.7" fill="none"/>
<rect x="201.63" y="212.58" width="9.25" height="3.07" fill="#5b7d9b"/>
<rect x="232.51" y="212.58" width="7.89" height="3.07" fill="#5b7d9b"/>
<path d="M205.41 219.08L216.23 219.08" stroke="#2e8f5c" stroke-width="1.0" fill="none"/>
<path d="M225.38 219.08L236.24 219.08" stroke="#2e8f5c" stroke-width="1.0" fill="none"/>
<path d="M219.3 219.71L218.41 220.61L217.15 220.61L216.25 219.71L216.25 218.45L217.15 217.56L218.41 217.56L219.3 218.45Z" stroke="#7c4a68" stroke-width="0.7" fill="none"/>
<path d="M225.35 219.71L224.46 220.61L223.2 220.61L222.3 219.71L222.3 218.45L223.2 217.56L224.46 217.56L225.35 218.45Z" stroke="#7c4a68" stroke-width="0.7" fill="none"/>
<rect x="201.63" y="216" width="7.72" height="3.07" fill="#5b7d9b"/>
<rect x="232.51" y="216" width="9.25" height="3.07" fill="#5b7d9b"/>
<path d="M205.41 222.42L216.23 222.42" stroke="#2e8f5c" stroke-width="1.0" fill="none"/>
<path d="M225.38 222.42L236.24 222.42" stroke="#2e8f5c" stroke-width="1.0" fill="none"/>
<path d="M219.3 223.05L218.41 223.95L217.15 223.95L216.25 223.05L216.25 221.79L217.15 220.9L218.41 220.9L219.3 221.79Z" stroke="#7c4a68" stroke-width="0.7" fill="none"/>
<path d="M225.35 223.05L224.46 223.95L223.2 223.95L222.3 223.05L222.3 221.79L223.2 220.9L224.46 220.9L225.35 221.79Z" stroke="#7c4a68" stroke-width="0.7" fill="none"/>
<rect x="201.63" y="219.33" width="5.33" height="3.07" fill="#5b7d9b"/>
<rect x="232.51" y="219.33" width="8.23" height="3.07" fill="#5b7d9b"/>
<rect x="210.03" y="226.39" width="19.91" height="3.05" fill="#5b7d9b"/>
<path d="M244.49 192.37L258.58 192.37L258.58 221.09L244.49 221.09Z" stroke="#7c4a68" stroke-width="1.0" fill="none"/>
<path d="M254.9 198.44L261.89 198.44" stroke="#7c4a68" stroke-width="1.0" fill="none"/>
<path d="M261.89 198.44L268.77 198.44" stroke="#2e8f5c" stroke-width="1.0" fill="none"/>
<rect x="264.91" y="195.36" width="8.23" height="3.07" fill="#5b7d9b"/>
<path d="M254.9 201.81L261.89 201.81" stroke="#7c4a68" stroke-width="1.0" fill="none"/>
<path d="M254.9 205.19L261.89 205.19" stroke="#7c4a68" stroke-width="1.0" fill="none"/>
<path d="M261.89 205.19L268.77 205.19" stroke="#2e8f5c" stroke-width="1.0" fill="none"/>
<rect x="264.91" y="202.11" width="7.89" height="3.07" fill="#5b7d9b"/>
<path d="M254.9 208.78L261.89 208.78" stroke="#7c4a68" stroke-width="1.0" fill="none"/>
<path d="M261.89 208.78L268.77 208.78" stroke="#2e8f5c" stroke-width="1.0" fill="none"/>
<rect x="264.91" y="205.69" width="5.33" height="3.07" fill="#5b7d9b"/>
<path d="M254.9 212.24L261.89 212.24" stroke="#7c4a68" stroke-width="1.0" fill="none"/>
<path d="M261.89 212.24L268.77 212.24" stroke="#2e8f5c" stroke-width="1.0" fill="none"/>
<rect x="264.91" y="209.15" width="5.67" height="3.07" fill="#5b7d9b"/>
<path d="M254.9 215.6L261.07 215.6" stroke="#7c4a68" stroke-width="1.0" fill="none"/>
<rect x="245.65" y="193.1" width="11.85" height="3.05" fill="#5b7d9b"/>
<rect x="244.75" y="216.67" width="13.55" height="3.05" fill="#5b7d9b"/>
<path d="M242.24 178.47L246.28 178.47" stroke="#7c4a68" stroke-width="1.0" fill="none"/>
<path d="M245.33 176.65L242.38 178.47L245.33 180.3" stroke="#7c4a68" stroke-width="1.0" fill="none"/>
<path d="M246.28 178.47L249.79 178.47" stroke="#2e8f5c" stroke-width="1.0" fill="none"/>
<path d="M249.79 178.47L252.96 178.47" stroke="#7c4a68" stroke-width="1.0" fill="none"/>
<path d="M252.96 174.81L252.96 182.02" stroke="#7c4a68" stroke-width="1.0" fill="none"/>
<path d="M255.74 174.85Q253.17 178.47 255.74 181.95" stroke="#7c4a68" stroke-width="1" fill="none"/>
<path d="M254.48 178.47L260.09 178.47" stroke="#7c4a68" stroke-width="1.0" fill="none"/>
<path d="M260.09 178.47L263.56 178.47" stroke="#2e8f5c" stroke-width="1.0" fill="none"/>
<path d="M263.56 178.47L267.62 178.47" stroke="#7c4a68" stroke-width="1.0" fill="none"/>
<path d="M266.75 175.48L266.75 181" stroke="#7c4a68" stroke-width="1.0" fill="none"/>
<rect x="267.21" y="173.63" width="3.05" height="8.18" fill="#5b7d9b"/>
<rect x="251.2" y="171.08" width="5.25" height="3.05" fill="#5b7d9b"/>
<rect x="251.2" y="182.19" width="9.94" height="3.05" fill="#5b7d9b"/>
<rect x="238.76" y="181.22" width="8.18" height="3.05" fill="#5b7d9b"/>
<path d="M180.16 243.58L191.46 243.58" stroke="#2e8f5c" stroke-width="1.0" fill="none"/>
<rect x="180.71" y="240.45" width="7.16" height="3.07" fill="#5b7d9b"/>
<path d="M191.46 243.58L194.56 243.58" stroke="#7c4a68" stroke-width="1.0" fill="none"/>
<path d="M194.56 243.58L195.07 242.2L195.93 244.96L196.79 242.2L197.64 244.96L198.5 242.2L199.36 244.96L200.21 242.2L201.07 244.96L201.41 243.58" stroke="#7c4a68" stroke-width="1.0" fill="none"/>
<path d="M201.41 243.58L205.14 243.58" stroke="#7c4a68" stroke-width="1.0" fill="none"/>
<path d="M205.14 243.58L212.03 243.58" stroke="#2e8f5c" stroke-width="1.0" fill="none"/>
<path d="M212.03 243.58L215.13 243.58" stroke="#7c4a68" stroke-width="1.0" fill="none"/>
<path d="M215.13 241.77L218.62 243.58L215.13 245.3Z" stroke="#7c4a68" stroke-width="1.0" fill="none"/>
<path d="M218.66 241.7L218.66 245.37" stroke="#7c4a68" stroke-width="1.0" fill="none"/>
<path d="M218.66 243.58L222.32 243.58" stroke="#7c4a68" stroke-width="1.0" fill="none"/>
<path d="M222.32 243.58L229.22 243.58" stroke="#2e8f5c" stroke-width="1.0" fill="none"/>
<path d="M229.22 243.58L233.38 243.58" stroke="#7c4a68" stroke-width="1.0" fill="none"/>
<path d="M232.46 240.68L232.46 246.32" stroke="#7c4a68" stroke-width="1.0" fill="none"/>
<rect x="232.82" y="238.76" width="3.05" height="8.08" fill="#5b7d9b"/>
<rect x="192.64" y="238.53" width="5.32" height="3.05" fill="#5b7d9b"/>
<rect x="192.49" y="245.11" width="9.27" height="3.05" fill="#5b7d9b"/>
<rect x="200.55" y="235.16" width="21.66" height="3.05" fill="#5b7d9b"/>
<rect x="214.18" y="238.07" width="7.98" height="3.05" fill="#5b7d9b"/>
<path d="M216.29 246.29L217.74 247.6" stroke="#7c4a68" stroke-width="0.7" fill="none"/>
<path d="M217.94 246.29L219.39 247.6" stroke="#7c4a68" stroke-width="0.7" fill="none"/>
<path d="M122 243.3H129.8M142.6 243.3H151.4" stroke="#2e8f5c" stroke-width="1" fill="none"/>
<path d="M129.8 243.3H132.8L133.6 241.9L135.2 244.7L136.8 241.9L138.4 244.7L139.6 243.3H142.6" stroke="#7c4a68" stroke-width="1" fill="none"/>
<rect x="119" y="240.9" width="6.9" height="2.9" fill="#5b7d9b"/>
<rect x="131" y="239.1" width="4.9" height="2.9" fill="#5b7d9b"/>
<rect x="131" y="244.9" width="2.8" height="2.8" fill="#5b7d9b"/>
<rect x="146.9" y="240.9" width="5.1" height="2.9" fill="#5b7d9b"/>
</g>
<!--THEND-->
<g id="sheets2">
<!-- float icon -->
<rect x="279.800" y="99.800" width="5" height="5" fill="#f0f0f0" stroke="#000" stroke-width="1.200"/>
<rect x="279.200" y="99.200" width="6.200" height="1.800" fill="#000"/>
<rect x="277.600" y="102.900" width="5" height="4.800" fill="#f0f0f0" stroke="#000" stroke-width="1.200"/>
<rect x="277" y="102.300" width="6.200" height="1.800" fill="#000"/>
<!-- close X -->
<path d="M293.500 100.300L300.500 107.200M300.500 100.300L293.500 107.200" stroke="#000" stroke-width="1.700" fill="none"/>
<!-- chevrons -->
<path d="M293 128.300L296.500 123.600L300 128.300" fill="none" stroke="#b9b9b9" stroke-width="1.700"/>
<path d="M293 666.300L296.500 671L300 666.300" fill="none" stroke="#b9b9b9" stroke-width="1.700"/>
<!-- texts -->
<text x="119.200" y="108" font-size="12.500" fill="#1e1e1e" textLength="32.800" lengthAdjust="spacingAndGlyphs">Sheets</text>
<text x="175.800" y="313.600" font-size="12" fill="#9a968e" textLength="5" lengthAdjust="spacingAndGlyphs">1</text>
<text x="318" y="111.800" font-size="13" fill="#2a2a2a" textLength="97.500" lengthAdjust="spacingAndGlyphs">0.1 inch (4.8 0.4)</text>
<text x="6" y="696" font-size="12.500" fill="#1e1e1e" textLength="428" lengthAdjust="spacingAndGlyphs">Left-click&amp;drag to define group (or left-click to start defining a group polygon)</text>
<path d="M1349 104.200H1355.200L1352.100 108.400Z" fill="#5a5a5a"/>
<!-- bolt -->
<path d="M1334.900 683L1329 693.200H1334.600L1334.900 699.200L1341.200 688.700H1335.600Z" fill="#76b82a"/>
</g>

</svg>
<!-- SCHEMATIC -->
<svg id="sch" style="left:0;top:0" width="1366" height="704" viewBox="0 0 1366 704" font-family="Liberation Sans, sans-serif" fill="none">
<text x="657.6" y="267.9" font-size="12.4" fill="#828282" text-anchor="end" textLength="145" lengthAdjust="spacingAndGlyphs">(PCINT11/RESET/DW)PB3</text>
<text x="684" y="262.1" font-size="12.4" fill="#828282" textLength="6.56" lengthAdjust="spacingAndGlyphs">4</text>
<path d="M710.8 264.5H718.2M714.5 260.8V268.2" stroke="#828282" stroke-width="1" fill="none"/>
<text x="714.8" y="263.4" font-size="13.6" fill="#828282" textLength="25.4" lengthAdjust="spacingAndGlyphs">RST</text>
<text x="657.6" y="282.05" font-size="12.4" fill="#828282" text-anchor="end" textLength="188.8" lengthAdjust="spacingAndGlyphs">(PCINT10/INT0/OC0A/CKOUT)PB2</text>
<text x="684" y="276.25" font-size="12.4" fill="#828282" textLength="6.56" lengthAdjust="spacingAndGlyphs">5</text>
<path d="M710.8 278.5H718.2M714.5 274.8V282.2" stroke="#828282" stroke-width="1" fill="none"/>
<text x="714.8" y="277.55" font-size="13.6" fill="#828282" textLength="24" lengthAdjust="spacingAndGlyphs">PB2</text>
<text x="657.6" y="296.2" font-size="12.4" fill="#828282" text-anchor="end" textLength="110.1" lengthAdjust="spacingAndGlyphs">(PCINT9/XTAL2)PB1</text>
<text x="684" y="290.4" font-size="12.4" fill="#828282" textLength="6.56" lengthAdjust="spacingAndGlyphs">3</text>
<path d="M710.8 292.5H718.2M714.5 288.8V296.2" stroke="#828282" stroke-width="1" fill="none"/>
<text x="714.8" y="291.7" font-size="13.6" fill="#828282" textLength="15.53" lengthAdjust="spacingAndGlyphs">X2</text>
<text x="657.6" y="310.35" font-size="12.4" fill="#828282" text-anchor="end" textLength="140.1" lengthAdjust="spacingAndGlyphs">(PCINT8/XTAL1/CLKI)PB0</text>
<text x="684" y="304.55" font-size="12.4" fill="#828282" textLength="6.56" lengthAdjust="spacingAndGlyphs">2</text>
<path d="M710.8 306.5H718.2M714.5 302.8V310.2" stroke="#828282" stroke-width="1" fill="none"/>
<text x="714.8" y="305.85" font-size="13.6" fill="#828282" textLength="15.53" lengthAdjust="spacingAndGlyphs">X1</text>
<text x="657.6" y="338.65" font-size="12.4" fill="#828282" text-anchor="end" textLength="165" lengthAdjust="spacingAndGlyphs">(PCINT7/ICP/OC0B/ADC7)PA7</text>
<text x="684" y="332.85" font-size="12.4" fill="#828282" textLength="6.56" lengthAdjust="spacingAndGlyphs">6</text>
<path d="M710.8 335.5H718.2M714.5 331.8V339.2" stroke="#828282" stroke-width="1" fill="none"/>
<text x="714.8" y="334.15" font-size="13.6" fill="#828282" textLength="23.06" lengthAdjust="spacingAndGlyphs">PA7</text>
<text x="657.6" y="352.8" font-size="12.4" fill="#828282" text-anchor="end" textLength="200.3" lengthAdjust="spacingAndGlyphs">(PCINT6/OC1A/SDA/MOSI/ADC6)PA6</text>
<text x="684" y="347" font-size="12.4" fill="#828282" textLength="6.56" lengthAdjust="spacingAndGlyphs">7</text>
<path d="M710.8 349.5H718.2M714.5 345.8V353.2" stroke="#828282" stroke-width="1" fill="none"/>
<text x="714.8" y="348.3" font-size="13.6" fill="#828282" textLength="32.46" lengthAdjust="spacingAndGlyphs">MOSI</text>
<text x="657.6" y="366.95" font-size="12.4" fill="#828282" text-anchor="end" textLength="194.9" lengthAdjust="spacingAndGlyphs">(PCINT5/OC1B/MISO/DO/ADC5)PA5</text>
<text x="684" y="361.15" font-size="12.4" fill="#828282" textLength="6.56" lengthAdjust="spacingAndGlyphs">8</text>
<path d="M710.8 363.5H718.2M714.5 359.8V367.2" stroke="#828282" stroke-width="1" fill="none"/>
<text x="714.8" y="362.45" font-size="13.6" fill="#828282" textLength="32.46" lengthAdjust="spacingAndGlyphs">MISO</text>
<text x="657.6" y="381.1" font-size="12.4" fill="#828282" text-anchor="end" textLength="187.2" lengthAdjust="spacingAndGlyphs">(PCINT4/T1/SCL/USCK/ADC4)PA4</text>
<text x="684" y="375.3" font-size="12.4" fill="#828282" textLength="6.56" lengthAdjust="spacingAndGlyphs">9</text>
<path d="M710.8 377.5H718.2M714.5 373.8V381.2" stroke="#828282" stroke-width="1" fill="none"/>
<text x="714.8" y="376.6" font-size="13.6" fill="#828282" textLength="26.11" lengthAdjust="spacingAndGlyphs">SCK</text>
<text x="657.6" y="395.25" font-size="12.4" fill="#828282" text-anchor="end" textLength="122.8" lengthAdjust="spacingAndGlyphs">(PCINT3/T0/ADC3)PA3</text>
<text x="684" y="389.45" font-size="12.4" fill="#828282" textLength="13.12" lengthAdjust="spacingAndGlyphs">10</text>
<path d="M710.8 391.5H718.2M714.5 387.8V395.2" stroke="#828282" stroke-width="1" fill="none"/>
<text x="714.8" y="390.75" font-size="13.6" fill="#828282" textLength="23.06" lengthAdjust="spacingAndGlyphs">PA3</text>
<text x="657.6" y="409.4" font-size="12.4" fill="#828282" text-anchor="end" textLength="135.1" lengthAdjust="spacingAndGlyphs">(PCINT2/AIN1/ADC2)PA2</text>
<text x="684" y="403.6" font-size="12.4" fill="#828282" textLength="12.25" lengthAdjust="spacingAndGlyphs">11</text>
<path d="M710.8 405.5H718.2M714.5 401.8V409.2" stroke="#828282" stroke-width="1" fill="none"/>
<text x="714.8" y="404.9" font-size="13.6" fill="#828282" textLength="23.06" lengthAdjust="spacingAndGlyphs">PA2</text>
<text x="657.6" y="423.55" font-size="12.4" fill="#828282" text-anchor="end" textLength="135.1" lengthAdjust="spacingAndGlyphs">(PCINT1/AIN0/ADC1)PA1</text>
<text x="684" y="417.75" font-size="12.4" fill="#828282" textLength="13.12" lengthAdjust="spacingAndGlyphs">12</text>
<path d="M710.8 420.5H718.2M714.5 416.8V424.2" stroke="#828282" stroke-width="1" fill="none"/>
<text x="714.8" y="419.05" font-size="13.6" fill="#828282" textLength="17.64" lengthAdjust="spacingAndGlyphs">RX</text>
<text x="657.6" y="437.7" font-size="12.4" fill="#828282" text-anchor="end" textLength="140.1" lengthAdjust="spacingAndGlyphs">(PCINT0/AREF/ADC0)PA0</text>
<text x="684" y="431.9" font-size="12.4" fill="#828282" textLength="13.12" lengthAdjust="spacingAndGlyphs">13</text>
<path d="M710.8 434.5H718.2M714.5 430.8V438.2" stroke="#828282" stroke-width="1" fill="none"/>
<text x="714.8" y="433.2" font-size="13.6" fill="#828282" textLength="16.23" lengthAdjust="spacingAndGlyphs">TX</text>
<text x="381.3" y="361.1" font-size="12.4" fill="#828282" textLength="6.56" lengthAdjust="spacingAndGlyphs">1</text>
<text x="374.5" y="432" font-size="12.4" fill="#828282" textLength="13.12" lengthAdjust="spacingAndGlyphs">14</text>
<text x="414.2" y="367" font-size="12.4" fill="#828282" textLength="24.91" lengthAdjust="spacingAndGlyphs">VCC</text>
<text x="414.6" y="437.9" font-size="12.4" fill="#828282" textLength="26.22" lengthAdjust="spacingAndGlyphs">GND</text>
<text x="402" y="244.6" font-size="13.5" fill="#828282" textLength="18.7" lengthAdjust="spacingAndGlyphs">IC1</text>
<text x="401.5" y="461.6" font-size="13.5" fill="#828282" textLength="94" lengthAdjust="spacingAndGlyphs">ATTINY44-SSU</text>
<text transform="translate(344.4 348.6) rotate(-90)" font-size="13.5" fill="#828282" textLength="27.8" lengthAdjust="spacingAndGlyphs">VCC</text>
<text x="344.7" y="475.2" font-size="13.5" fill="#828282" textLength="28.5" lengthAdjust="spacingAndGlyphs">GND</text>
<text transform="translate(826.9 263.9) rotate(-90)" font-size="13.5" fill="#828282" textLength="28.3" lengthAdjust="spacingAndGlyphs">VCC</text>
<text transform="translate(833.2 326.9) rotate(-90)" font-size="13.5" fill="#828282" textLength="15.9" lengthAdjust="spacingAndGlyphs">R2</text>
<text transform="translate(858.7 327.8) rotate(-90)" font-size="13.5" fill="#828282" textLength="35" lengthAdjust="spacingAndGlyphs">4.99k</text>
<path d="M852.8 349.5H860.2M856.5 345.8V353.2" stroke="#828282" stroke-width="1" fill="none"/>
<text x="856.9" y="348.4" font-size="13.6" fill="#828282" textLength="25.4" lengthAdjust="spacingAndGlyphs">RST</text>
<text transform="translate(839.8 375.1) rotate(-90)" font-size="12.4" fill="#828282" textLength="6.56" lengthAdjust="spacingAndGlyphs">3</text>
<text transform="translate(853.6 375.1) rotate(-90)" font-size="12.4" fill="#828282" textLength="6.56" lengthAdjust="spacingAndGlyphs">4</text>
<text transform="translate(839.8 413.9) rotate(-90)" font-size="12.4" fill="#828282" textLength="6.56" lengthAdjust="spacingAndGlyphs">1</text>
<text transform="translate(853.6 413.9) rotate(-90)" font-size="12.4" fill="#828282" textLength="6.56" lengthAdjust="spacingAndGlyphs">2</text>
<text transform="translate(806 405) rotate(-90)" font-size="13.5" fill="#828282" textLength="44.5" lengthAdjust="spacingAndGlyphs">RESET</text>
<text x="827.9" y="461.4" font-size="13.5" fill="#828282" textLength="28.4" lengthAdjust="spacingAndGlyphs">GND</text>
<text transform="translate(1266.8 263.9) rotate(-90)" font-size="13.5" fill="#828282" textLength="28.3" lengthAdjust="spacingAndGlyphs">VCC</text>
<text transform="translate(1273.1 326.9) rotate(-90)" font-size="13.5" fill="#828282" textLength="15.9" lengthAdjust="spacingAndGlyphs">R4</text>
<text transform="translate(1298.6 327.8) rotate(-90)" font-size="13.5" fill="#828282" textLength="35" lengthAdjust="spacingAndGlyphs">4.99K</text>
<path d="M1292.8 349.5H1300.2M1296.5 345.8V353.2" stroke="#828282" stroke-width="1" fill="none"/>
<text x="1296.8" y="348.4" font-size="13.6" fill="#828282" textLength="24" lengthAdjust="spacingAndGlyphs">PB2</text>
<text transform="translate(1279.7 375.1) rotate(-90)" font-size="12.4" fill="#828282" textLength="6.56" lengthAdjust="spacingAndGlyphs">3</text>
<text transform="translate(1293.5 375.1) rotate(-90)" font-size="12.4" fill="#828282" textLength="6.56" lengthAdjust="spacingAndGlyphs">4</text>
<text transform="translate(1279.7 413.9) rotate(-90)" font-size="12.4" fill="#828282" textLength="6.56" lengthAdjust="spacingAndGlyphs">1</text>
<text transform="translate(1293.5 413.9) rotate(-90)" font-size="12.4" fill="#828282" textLength="6.56" lengthAdjust="spacingAndGlyphs">2</text>
<text transform="translate(1246 404.6) rotate(-90)" font-size="13.5" fill="#828282" textLength="14.5" lengthAdjust="spacingAndGlyphs">S1</text>
<text x="1267.8" y="461.4" font-size="13.5" fill="#828282" textLength="28.4" lengthAdjust="spacingAndGlyphs">GND</text>
<text x="955.7" y="242" font-size="13.5" fill="#828282" textLength="43.2" lengthAdjust="spacingAndGlyphs">20MHZ</text>
<path d="M909.8 264.5H917.2M913.5 260.8V268.2" stroke="#828282" stroke-width="1" fill="none"/>
<text x="913.8" y="263.2" font-size="13.6" fill="#828282" textLength="15.53" lengthAdjust="spacingAndGlyphs">X1</text>
<path d="M1036.8 264.5H1044.2M1040.5 260.8V268.2" stroke="#828282" stroke-width="1" fill="none"/>
<text x="1041.1" y="263.2" font-size="13.6" fill="#828282" textLength="15.53" lengthAdjust="spacingAndGlyphs">X2</text>
<text x="946.6" y="262.1" font-size="12.4" fill="#828282" textLength="6.56" lengthAdjust="spacingAndGlyphs">1</text>
<text x="1014.6" y="262.1" font-size="12.4" fill="#828282" textLength="6.56" lengthAdjust="spacingAndGlyphs">3</text>
<text transform="translate(981.8 301.1) rotate(-90)" font-size="12.4" fill="#828282" textLength="6.56" lengthAdjust="spacingAndGlyphs">2</text>
<text x="969.8" y="376.6" font-size="13.5" fill="#828282" textLength="28.4" lengthAdjust="spacingAndGlyphs">GND</text>
<text x="998.4" y="305.7" font-size="13.5" fill="#828282" textLength="84.6" lengthAdjust="spacingAndGlyphs">RESONATOR</text>
<text x="997.7" y="318.6" font-size="13.5" fill="#828282">0</text>
<text x="987.5" y="345.5" font-size="13.5" fill="#828282" textLength="17" lengthAdjust="spacingAndGlyphs">R7</text>
<text x="940.6" y="400.5" font-size="13.5" fill="#828282" textLength="23.4" lengthAdjust="spacingAndGlyphs">U$1</text>
<path d="M901.8 419.5H909.2M905.5 415.8V423.2" stroke="#828282" stroke-width="1" fill="none"/>
<text x="905.9" y="418.4" font-size="13.6" fill="#828282" textLength="32.46" lengthAdjust="spacingAndGlyphs">MISO</text>
<path d="M1029.8 419.5H1037.2M1033.5 415.8V423.2" stroke="#828282" stroke-width="1" fill="none"/>
<text x="1033.5" y="418.4" font-size="13.6" fill="#828282" textLength="26.81" lengthAdjust="spacingAndGlyphs">VCC</text>
<text x="948" y="414.9" font-size="9.2" fill="#828282">MISO</text>
<text x="1018" y="414.9" font-size="9.2" fill="#828282" text-anchor="end">VCC</text>
<path d="M901.8 433.5H909.2M905.5 429.8V437.2" stroke="#828282" stroke-width="1" fill="none"/>
<text x="905.9" y="432.5" font-size="13.6" fill="#828282" textLength="26.11" lengthAdjust="spacingAndGlyphs">SCK</text>
<path d="M1029.8 433.5H1037.2M1033.5 429.8V437.2" stroke="#828282" stroke-width="1" fill="none"/>
<text x="1033.5" y="432.5" font-size="13.6" fill="#828282" textLength="32.46" lengthAdjust="spacingAndGlyphs">MOSI</text>
<text x="948" y="429" font-size="9.2" fill="#828282">SCK</text>
<text x="1018" y="429" font-size="9.2" fill="#828282" text-anchor="end">MOSI</text>
<path d="M901.8 447.5H909.2M905.5 443.8V451.2" stroke="#828282" stroke-width="1" fill="none"/>
<text x="905.9" y="446.3" font-size="13.6" fill="#828282" textLength="16.23" lengthAdjust="spacingAndGlyphs">R0</text>
<path d="M1029.8 447.5H1037.2M1033.5 443.8V451.2" stroke="#828282" stroke-width="1" fill="none"/>
<text x="1033.5" y="446.3" font-size="13.6" fill="#828282" textLength="28.22" lengthAdjust="spacingAndGlyphs">GND</text>
<text x="948" y="442.8" font-size="9.2" fill="#828282">RST</text>
<text x="1018" y="442.8" font-size="9.2" fill="#828282" text-anchor="end">GND</text>
<text x="940.6" y="475.4" font-size="13.5" fill="#828282" textLength="76.5" lengthAdjust="spacingAndGlyphs">AVRISPSMD</text>
<text x="1153.4" y="361.1" font-size="12.4" fill="#828282" textLength="6.56" lengthAdjust="spacingAndGlyphs">1</text>
<text x="1126.4" y="367.2" font-size="12.4" fill="#828282" text-anchor="end" textLength="26.22" lengthAdjust="spacingAndGlyphs">GND</text>
<path d="M1179.8 363.5H1187.2M1183.5 359.8V367.2" stroke="#828282" stroke-width="1" fill="none"/>
<text x="1183.1" y="362.5" font-size="13.6" fill="#828282" textLength="28.22" lengthAdjust="spacingAndGlyphs">GND</text>
<text x="1153.4" y="375" font-size="12.4" fill="#828282" textLength="6.56" lengthAdjust="spacingAndGlyphs">2</text>
<text x="1126.4" y="381.1" font-size="12.4" fill="#828282" text-anchor="end" textLength="23.6" lengthAdjust="spacingAndGlyphs">CTS</text>
<text x="1153.4" y="389" font-size="12.4" fill="#828282" textLength="6.56" lengthAdjust="spacingAndGlyphs">3</text>
<text x="1126.4" y="395.1" font-size="12.4" fill="#828282" text-anchor="end" textLength="24.91" lengthAdjust="spacingAndGlyphs">VCC</text>
<path d="M1179.8 391.5H1187.2M1183.5 387.8V395.2" stroke="#828282" stroke-width="1" fill="none"/>
<text x="1183.1" y="390.4" font-size="13.6" fill="#828282" textLength="26.81" lengthAdjust="spacingAndGlyphs">VCC</text>
<text x="1153.4" y="403.8" font-size="12.4" fill="#828282" textLength="6.56" lengthAdjust="spacingAndGlyphs">4</text>
<text x="1126.4" y="409.9" font-size="12.4" fill="#828282" text-anchor="end" textLength="23.6" lengthAdjust="spacingAndGlyphs">TXD</text>
<path d="M1179.8 406.5H1187.2M1183.5 402.8V410.2" stroke="#828282" stroke-width="1" fill="none"/>
<text x="1183.1" y="405.2" font-size="13.6" fill="#828282" textLength="16.23" lengthAdjust="spacingAndGlyphs">TX</text>
<text x="1153.4" y="418.1" font-size="12.4" fill="#828282" textLength="6.56" lengthAdjust="spacingAndGlyphs">5</text>
<text x="1126.4" y="424.2" font-size="12.4" fill="#828282" text-anchor="end" textLength="24.91" lengthAdjust="spacingAndGlyphs">RXD</text>
<path d="M1179.8 420.5H1187.2M1183.5 416.8V424.2" stroke="#828282" stroke-width="1" fill="none"/>
<text x="1183.1" y="419.5" font-size="13.6" fill="#828282" textLength="17.64" lengthAdjust="spacingAndGlyphs">RX</text>
<text x="1153.4" y="432" font-size="12.4" fill="#828282" textLength="6.56" lengthAdjust="spacingAndGlyphs">6</text>
<text x="1126.4" y="438.1" font-size="12.4" fill="#828282" text-anchor="end" textLength="23.39" lengthAdjust="spacingAndGlyphs">RTS</text>
<text x="1103.5" y="353.1" font-size="13.5" fill="#828282" textLength="43.2" lengthAdjust="spacingAndGlyphs">(Black)</text>
<text x="1099.8" y="450.5" font-size="13.5" fill="#828282" textLength="50.2" lengthAdjust="spacingAndGlyphs">(Green)</text>
<text transform="translate(1210.6 276.9) rotate(-90)" font-size="13.5" fill="#828282" textLength="28" lengthAdjust="spacingAndGlyphs">GND</text>
<text x="1133.9" y="245.6" font-size="13.5" fill="#828282" textLength="15.9" lengthAdjust="spacingAndGlyphs">C1</text>
<text x="1133.9" y="291.5" font-size="13.5" fill="#828282" textLength="35.3" lengthAdjust="spacingAndGlyphs">0.1uF</text>
<text x="1082.5" y="287.5" font-size="13.5" fill="#828282" textLength="28" lengthAdjust="spacingAndGlyphs">VCC</text>
<path d="M838.8 533.5H846.2M842.5 529.8V537.2" stroke="#828282" stroke-width="1" fill="none"/>
<text x="842.6" y="532.3" font-size="13.6" fill="#828282" textLength="23.8" lengthAdjust="spacingAndGlyphs">PA7</text>
<text transform="translate(1068.5 545.6) rotate(-90)" font-size="13.5" fill="#828282" textLength="27.6" lengthAdjust="spacingAndGlyphs">GND</text>
<text x="891.9" y="524.3" font-size="13.5" fill="#828282" textLength="16.2" lengthAdjust="spacingAndGlyphs">R1</text>
<text x="891.3" y="551.5" font-size="13.5" fill="#828282" textLength="32.5" lengthAdjust="spacingAndGlyphs">499R</text>
<text x="924.6" y="510.4" font-size="13.5" fill="#828282" textLength="83.7" lengthAdjust="spacingAndGlyphs">LEDFAB1206</text>
<text x="980.9" y="522.4" font-size="13.5" fill="#828282" textLength="27.2" lengthAdjust="spacingAndGlyphs">RED</text>
<path d="M402 250L672 250L672 448L402 448Z" stroke="#a5393d" stroke-width="2.3" fill="none" stroke-linecap="butt" stroke-linejoin="miter"/>
<path d="M672.5 264.5L700.5 264.5" stroke="#a5393d" stroke-width="1" fill="none" stroke-linecap="butt" stroke-linejoin="miter"/>
<path d="M700.5 264.5L728.5 264.5" stroke="#2f9a37" stroke-width="1" fill="none" stroke-linecap="butt" stroke-linejoin="miter"/>
<path d="M672.5 278.5L700.5 278.5" stroke="#a5393d" stroke-width="1" fill="none" stroke-linecap="butt" stroke-linejoin="miter"/>
<path d="M700.5 278.5L728.5 278.5" stroke="#2f9a37" stroke-width="1" fill="none" stroke-linecap="butt" stroke-linejoin="miter"/>
<path d="M672.5 292.5L700.5 292.5" stroke="#a5393d" stroke-width="1" fill="none" stroke-linecap="butt" stroke-linejoin="miter"/>
<path d="M700.5 292.5L728.5 292.5" stroke="#2f9a37" stroke-width="1" fill="none" stroke-linecap="butt" stroke-linejoin="miter"/>
<path d="M672.5 306.5L700.5 306.5" stroke="#a5393d" stroke-width="1" fill="none" stroke-linecap="butt" stroke-linejoin="miter"/>
<path d="M700.5 306.5L728.5 306.5" stroke="#2f9a37" stroke-width="1" fill="none" stroke-linecap="butt" stroke-linejoin="miter"/>
<path d="M672.5 335.5L700.5 335.5" stroke="#a5393d" stroke-width="1" fill="none" stroke-linecap="butt" stroke-linejoin="miter"/>
<path d="M700.5 335.5L728.5 335.5" stroke="#2f9a37" stroke-width="1" fill="none" stroke-linecap="butt" stroke-linejoin="miter"/>
<path d="M672.5 349.5L700.5 349.5" stroke="#a5393d" stroke-width="1" fill="none" stroke-linecap="butt" stroke-linejoin="miter"/>
<path d="M700.5 349.5L728.5 349.5" stroke="#2f9a37" stroke-width="1" fill="none" stroke-linecap="butt" stroke-linejoin="miter"/>
<path d="M672.5 363.5L700.5 363.5" stroke="#a5393d" stroke-width="1" fill="none" stroke-linecap="butt" stroke-linejoin="miter"/>
<path d="M700.5 363.5L728.5 363.5" stroke="#2f9a37" stroke-width="1" fill="none" stroke-linecap="butt" stroke-linejoin="miter"/>
<path d="M672.5 377.5L700.5 377.5" stroke="#a5393d" stroke-width="1" fill="none" stroke-linecap="butt" stroke-linejoin="miter"/>
<path d="M700.5 377.5L728.5 377.5" stroke="#2f9a37" stroke-width="1" fill="none" stroke-linecap="butt" stroke-linejoin="miter"/>
<path d="M672.5 391.5L700.5 391.5" stroke="#a5393d" stroke-width="1" fill="none" stroke-linecap="butt" stroke-linejoin="miter"/>
<path d="M700.5 391.5L728.5 391.5" stroke="#2f9a37" stroke-width="1" fill="none" stroke-linecap="butt" stroke-linejoin="miter"/>
<path d="M672.5 405.5L700.5 405.5" stroke="#a5393d" stroke-width="1" fill="none" stroke-linecap="butt" stroke-linejoin="miter"/>
<path d="M700.5 405.5L728.5 405.5" stroke="#2f9a37" stroke-width="1" fill="none" stroke-linecap="butt" stroke-linejoin="miter"/>
<path d="M672.5 420.5L700.5 420.5" stroke="#a5393d" stroke-width="1" fill="none" stroke-linecap="butt" stroke-linejoin="miter"/>
<path d="M700.5 420.5L728.5 420.5" stroke="#2f9a37" stroke-width="1" fill="none" stroke-linecap="butt" stroke-linejoin="miter"/>
<path d="M672.5 434.5L700.5 434.5" stroke="#a5393d" stroke-width="1" fill="none" stroke-linecap="butt" stroke-linejoin="miter"/>
<path d="M700.5 434.5L728.5 434.5" stroke="#2f9a37" stroke-width="1" fill="none" stroke-linecap="butt" stroke-linejoin="miter"/>
<path d="M373.5 363.5L402.5 363.5" stroke="#a5393d" stroke-width="1" fill="none" stroke-linecap="butt" stroke-linejoin="miter"/>
<path d="M359.5 363.5L373.5 363.5" stroke="#2f9a37" stroke-width="1" fill="none" stroke-linecap="butt" stroke-linejoin="miter"/>
<path d="M373.5 434.5L402.5 434.5" stroke="#a5393d" stroke-width="1" fill="none" stroke-linecap="butt" stroke-linejoin="miter"/>
<path d="M359.5 434.5L373.5 434.5" stroke="#2f9a37" stroke-width="1" fill="none" stroke-linecap="butt" stroke-linejoin="miter"/>
<path d="M413.3 349.5H419.7M416.5 346.3V352.7" stroke="#a5393d" stroke-width="1" fill="none"/>
<path d="M359.5 363.5L359.5 349.5" stroke="#2f9a37" stroke-width="1" fill="none" stroke-linecap="butt" stroke-linejoin="miter"/>
<path d="M359.5 349.5L359.5 333.5" stroke="#a5393d" stroke-width="1" fill="none" stroke-linecap="butt" stroke-linejoin="miter"/>
<path d="M352.3 344.2L359.5 333.8L366.7 344.2" stroke="#a5393d" stroke-width="1.9" fill="none" stroke-linecap="round" stroke-linejoin="miter"/>
<path d="M359.5 434.5L359.5 448.5" stroke="#2f9a37" stroke-width="1" fill="none" stroke-linecap="butt" stroke-linejoin="miter"/>
<path d="M359.5 448.5L359.5 465.5" stroke="#a5393d" stroke-width="1" fill="none" stroke-linecap="butt" stroke-linejoin="miter"/>
<path d="M348 462L371 462" stroke="#a5393d" stroke-width="2.4" fill="none" stroke-linecap="butt" stroke-linejoin="miter"/>
<path d="M842.5 264.5L842.5 248.5" stroke="#a5393d" stroke-width="1" fill="none" stroke-linecap="butt" stroke-linejoin="miter"/>
<path d="M835.3 259.2L842.5 248.8L849.7 259.2" stroke="#a5393d" stroke-width="1.9" fill="none" stroke-linecap="round" stroke-linejoin="miter"/>
<path d="M842.5 264.5L842.5 278.5" stroke="#2f9a37" stroke-width="1" fill="none" stroke-linecap="butt" stroke-linejoin="miter"/>
<path d="M842.5 278.5L842.5 291.5" stroke="#a5393d" stroke-width="1" fill="none" stroke-linecap="butt" stroke-linejoin="miter"/>
<path d="M842.5 291.7L848.2 293.82L836.8 297.36L848.2 300.9L836.8 304.44L848.2 307.97L836.8 311.51L848.2 315.05L836.8 318.58L842.5 320" stroke="#a5393d" stroke-width="2.2" fill="none" stroke-linecap="round" stroke-linejoin="round"/>
<path d="M842.5 320.5L842.5 334.5" stroke="#a5393d" stroke-width="1" fill="none" stroke-linecap="butt" stroke-linejoin="miter"/>
<path d="M842.5 334.5L842.5 362.5" stroke="#2f9a37" stroke-width="1" fill="none" stroke-linecap="butt" stroke-linejoin="miter"/>
<circle cx="842.5" cy="349.5" r="3.4" fill="#2f9a37"/>
<path d="M842.5 349.5L871.5 349.5" stroke="#2f9a37" stroke-width="1" fill="none" stroke-linecap="butt" stroke-linejoin="miter"/>
<path d="M842.5 362.5L842.5 379.5" stroke="#a5393d" stroke-width="1" fill="none" stroke-linecap="butt" stroke-linejoin="miter"/>
<path d="M856.5 363.5L856.5 376.5L842.5 376.5" stroke="#a5393d" stroke-width="1" fill="none" stroke-linecap="butt" stroke-linejoin="miter"/>
<circle cx="842.5" cy="379.5" r="1.7" fill="#a5393d"/>
<circle cx="842.5" cy="406" r="1.7" fill="#a5393d"/>
<path d="M834.5 380.2L842.5 406" stroke="#a5393d" stroke-width="2.0" fill="none" stroke-linecap="round" stroke-linejoin="miter"/>
<path d="M842.5 406.5L842.5 420.5" stroke="#a5393d" stroke-width="1" fill="none" stroke-linecap="butt" stroke-linejoin="miter"/>
<path d="M842.5 406.5L856.5 406.5L856.5 420.5" stroke="#a5393d" stroke-width="1" fill="none" stroke-linecap="butt" stroke-linejoin="miter"/>
<path d="M824.8 381L817 381L817 401.8L824.8 401.8" stroke="#a5393d" stroke-width="2.0" fill="none" stroke-linecap="butt" stroke-linejoin="miter"/>
<path d="M818 391.6H834.5" stroke="#a5393d" stroke-width="1" stroke-dasharray="4.5 2.5" fill="none"/>
<path d="M837.7 391.5H845.3M841.5 387.7V395.3" stroke="#a5393d" stroke-width="1" fill="none"/>
<path d="M842.5 420.5L842.5 434.5" stroke="#2f9a37" stroke-width="1" fill="none" stroke-linecap="butt" stroke-linejoin="miter"/>
<path d="M856.5 420.5L856.5 427.5L842.5 427.5" stroke="#2f9a37" stroke-width="1" fill="none" stroke-linecap="butt" stroke-linejoin="miter"/>
<circle cx="842.5" cy="427.3" r="3.4" fill="#2f9a37"/>
<path d="M842.5 434.5L842.5 451.5" stroke="#a5393d" stroke-width="1" fill="none" stroke-linecap="butt" stroke-linejoin="miter"/>
<path d="M831 448L854 448" stroke="#a5393d" stroke-width="2.4" fill="none" stroke-linecap="butt" stroke-linejoin="miter"/>
<path d="M1282.5 264.5L1282.5 248.5" stroke="#a5393d" stroke-width="1" fill="none" stroke-linecap="butt" stroke-linejoin="miter"/>
<path d="M1275.2 259.2L1282.4 248.8L1289.6 259.2" stroke="#a5393d" stroke-width="1.9" fill="none" stroke-linecap="round" stroke-linejoin="miter"/>
<path d="M1282.5 264.5L1282.5 278.5" stroke="#2f9a37" stroke-width="1" fill="none" stroke-linecap="butt" stroke-linejoin="miter"/>
<path d="M1282.5 278.5L1282.5 291.5" stroke="#a5393d" stroke-width="1" fill="none" stroke-linecap="butt" stroke-linejoin="miter"/>
<path d="M1282.4 291.7L1288.1 293.82L1276.7 297.36L1288.1 300.9L1276.7 304.44L1288.1 307.97L1276.7 311.51L1288.1 315.05L1276.7 318.58L1282.4 320" stroke="#a5393d" stroke-width="2.2" fill="none" stroke-linecap="round" stroke-linejoin="round"/>
<path d="M1282.5 320.5L1282.5 334.5" stroke="#a5393d" stroke-width="1" fill="none" stroke-linecap="butt" stroke-linejoin="miter"/>
<path d="M1282.5 334.5L1282.5 362.5" stroke="#2f9a37" stroke-width="1" fill="none" stroke-linecap="butt" stroke-linejoin="miter"/>
<circle cx="1282.4" cy="349.5" r="3.4" fill="#2f9a37"/>
<path d="M1282.5 349.5L1311.5 349.5" stroke="#2f9a37" stroke-width="1" fill="none" stroke-linecap="butt" stroke-linejoin="miter"/>
<path d="M1282.5 362.5L1282.5 379.5" stroke="#a5393d" stroke-width="1" fill="none" stroke-linecap="butt" stroke-linejoin="miter"/>
<path d="M1296.5 363.5L1296.5 376.5L1282.5 376.5" stroke="#a5393d" stroke-width="1" fill="none" stroke-linecap="butt" stroke-linejoin="miter"/>
<circle cx="1282.4" cy="379.5" r="1.7" fill="#a5393d"/>
<circle cx="1282.4" cy="406" r="1.7" fill="#a5393d"/>
<path d="M1274.4 380.2L1282.4 406" stroke="#a5393d" stroke-width="2.0" fill="none" stroke-linecap="round" stroke-linejoin="miter"/>
<path d="M1282.5 406.5L1282.5 420.5" stroke="#a5393d" stroke-width="1" fill="none" stroke-linecap="butt" stroke-linejoin="miter"/>
<path d="M1282.5 406.5L1296.5 406.5L1296.5 420.5" stroke="#a5393d" stroke-width="1" fill="none" stroke-linecap="butt" stroke-linejoin="miter"/>
<path d="M1264.7 381L1256.9 381L1256.9 401.8L1264.7 401.8" stroke="#a5393d" stroke-width="2.0" fill="none" stroke-linecap="butt" stroke-linejoin="miter"/>
<path d="M1257.9 391.6H1274.4" stroke="#a5393d" stroke-width="1" stroke-dasharray="4.5 2.5" fill="none"/>
<path d="M1277.7 391.5H1285.3M1281.5 387.7V395.3" stroke="#a5393d" stroke-width="1" fill="none"/>
<path d="M1282.5 420.5L1282.5 434.5" stroke="#2f9a37" stroke-width="1" fill="none" stroke-linecap="butt" stroke-linejoin="miter"/>
<path d="M1282.5 434.5L1282.5 451.5" stroke="#a5393d" stroke-width="1" fill="none" stroke-linecap="butt" stroke-linejoin="miter"/>
<path d="M1270.9 448L1293.9 448" stroke="#a5393d" stroke-width="2.4" fill="none" stroke-linecap="butt" stroke-linejoin="miter"/>
<path d="M955.7 249.5L1013.2 249.5L1013.2 292L955.7 292Z" stroke="#a5393d" stroke-width="2.3" fill="none" stroke-linecap="butt" stroke-linejoin="miter"/>
<path d="M910.5 264.5L942.5 264.5" stroke="#2f9a37" stroke-width="1" fill="none" stroke-linecap="butt" stroke-linejoin="miter"/>
<path d="M942.5 264.5L977.5 264.5" stroke="#a5393d" stroke-width="1" fill="none" stroke-linecap="butt" stroke-linejoin="miter"/>
<path d="M991.5 264.5L1026.5 264.5" stroke="#a5393d" stroke-width="1" fill="none" stroke-linecap="butt" stroke-linejoin="miter"/>
<path d="M1026.5 264.5L1055.5 264.5" stroke="#2f9a37" stroke-width="1" fill="none" stroke-linecap="butt" stroke-linejoin="miter"/>
<path d="M977.5 257.5L977.5 271.5" stroke="#a5393d" stroke-width="1" fill="none" stroke-linecap="butt" stroke-linejoin="miter"/>
<path d="M991.5 257.5L991.5 271.5" stroke="#a5393d" stroke-width="1" fill="none" stroke-linecap="butt" stroke-linejoin="miter"/>
<path d="M981.5 257.5L987.5 257.5L987.5 271.5L981.5 271.5Z" stroke="#a5393d" stroke-width="1" fill="none" stroke-linecap="butt" stroke-linejoin="miter"/>
<path d="M984.5 260.5L984.5 268.5" stroke="#a5393d" stroke-width="1" fill="none" stroke-linecap="butt" stroke-linejoin="miter"/>
<path d="M982.5 264.5L985.5 264.5" stroke="#a5393d" stroke-width="1" fill="none" stroke-linecap="butt" stroke-linejoin="miter"/>
<path d="M963.5 262.5L963.5 281.5L969.5 281.5" stroke="#a5393d" stroke-width="1" fill="none" stroke-linecap="butt" stroke-linejoin="miter"/>
<path d="M969.5 276.5L969.5 288.5" stroke="#a5393d" stroke-width="1" fill="none" stroke-linecap="butt" stroke-linejoin="miter"/>
<path d="M974.5 276.5L974.5 288.5" stroke="#a5393d" stroke-width="1" fill="none" stroke-linecap="butt" stroke-linejoin="miter"/>
<path d="M974.5 281.5L993.5 281.5" stroke="#a5393d" stroke-width="1" fill="none" stroke-linecap="butt" stroke-linejoin="miter"/>
<path d="M993.5 276.5L993.5 288.5" stroke="#a5393d" stroke-width="1" fill="none" stroke-linecap="butt" stroke-linejoin="miter"/>
<path d="M998.5 276.5L998.5 288.5" stroke="#a5393d" stroke-width="1" fill="none" stroke-linecap="butt" stroke-linejoin="miter"/>
<path d="M998.5 281.5L1005.5 281.5L1005.5 262.5" stroke="#a5393d" stroke-width="1" fill="none" stroke-linecap="butt" stroke-linejoin="miter"/>
<path d="M984.5 280.5L984.5 300.5" stroke="#a5393d" stroke-width="1" fill="none" stroke-linecap="butt" stroke-linejoin="miter"/>
<path d="M984.5 300.5L984.5 306.5L949.5 306.5L949.5 328.5L956.5 328.5" stroke="#2f9a37" stroke-width="1" fill="none" stroke-linecap="butt" stroke-linejoin="miter"/>
<path d="M956.5 328.5L970.5 328.5" stroke="#a5393d" stroke-width="1" fill="none" stroke-linecap="butt" stroke-linejoin="miter"/>
<path d="M970 328.4L972.12 322.7L975.66 334.1L979.2 322.7L982.74 334.1L986.27 322.7L989.81 334.1L993.35 322.7L996.88 334.1L998.3 328.4" stroke="#a5393d" stroke-width="2.2" fill="none" stroke-linecap="round" stroke-linejoin="round"/>
<path d="M998.5 328.5L1013.5 328.5" stroke="#a5393d" stroke-width="1" fill="none" stroke-linecap="butt" stroke-linejoin="miter"/>
<path d="M1013.5 328.5L1027.5 328.5L1027.5 349.5L984.5 349.5" stroke="#2f9a37" stroke-width="1" fill="none" stroke-linecap="butt" stroke-linejoin="miter"/>
<path d="M984.5 349.5L984.5 366.5" stroke="#a5393d" stroke-width="1" fill="none" stroke-linecap="butt" stroke-linejoin="miter"/>
<path d="M973 363L996 363" stroke="#a5393d" stroke-width="2.4" fill="none" stroke-linecap="butt" stroke-linejoin="miter"/>
<path d="M889.5 382.7L1071.5 382.7L1071.5 483.5L889.5 483.5Z" stroke="#000000" stroke-width="5" fill="none" stroke-linecap="butt" stroke-linejoin="miter"/>
<rect x="941" y="405.1" width="85.8" height="56.3" rx="2" fill="none" stroke="#a5393d" stroke-width="2.4"/>
<path d="M920.5 419.5L965.5 419.5" stroke="#2f9a37" stroke-width="1" fill="none" stroke-linecap="butt" stroke-linejoin="miter"/>
<path d="M1002.5 419.5L1047.5 419.5" stroke="#2f9a37" stroke-width="1" fill="none" stroke-linecap="butt" stroke-linejoin="miter"/>
<path d="M977.7 421.91L974.01 425.6L968.79 425.6L965.1 421.91L965.1 416.69L968.79 413L974.01 413L977.7 416.69Z" stroke="#a5393d" stroke-width="1" fill="none" stroke-linecap="butt" stroke-linejoin="miter"/>
<path d="M1002.7 421.91L999.01 425.6L993.79 425.6L990.1 421.91L990.1 416.69L993.79 413L999.01 413L1002.7 416.69Z" stroke="#a5393d" stroke-width="1" fill="none" stroke-linecap="butt" stroke-linejoin="miter"/>
<path d="M920.5 433.5L965.5 433.5" stroke="#2f9a37" stroke-width="1" fill="none" stroke-linecap="butt" stroke-linejoin="miter"/>
<path d="M1002.5 433.5L1047.5 433.5" stroke="#2f9a37" stroke-width="1" fill="none" stroke-linecap="butt" stroke-linejoin="miter"/>
<path d="M977.7 436.01L974.01 439.7L968.79 439.7L965.1 436.01L965.1 430.79L968.79 427.1L974.01 427.1L977.7 430.79Z" stroke="#a5393d" stroke-width="1" fill="none" stroke-linecap="butt" stroke-linejoin="miter"/>
<path d="M1002.7 436.01L999.01 439.7L993.79 439.7L990.1 436.01L990.1 430.79L993.79 427.1L999.01 427.1L1002.7 430.79Z" stroke="#a5393d" stroke-width="1" fill="none" stroke-linecap="butt" stroke-linejoin="miter"/>
<path d="M920.5 447.5L965.5 447.5" stroke="#2f9a37" stroke-width="1" fill="none" stroke-linecap="butt" stroke-linejoin="miter"/>
<path d="M1002.5 447.5L1047.5 447.5" stroke="#2f9a37" stroke-width="1" fill="none" stroke-linecap="butt" stroke-linejoin="miter"/>
<path d="M977.7 449.81L974.01 453.5L968.79 453.5L965.1 449.81L965.1 444.59L968.79 440.9L974.01 440.9L977.7 444.59Z" stroke="#a5393d" stroke-width="1" fill="none" stroke-linecap="butt" stroke-linejoin="miter"/>
<path d="M1002.7 449.81L999.01 453.5L993.79 453.5L990.1 449.81L990.1 444.59L993.79 440.9L999.01 440.9L1002.7 444.59Z" stroke="#a5393d" stroke-width="1" fill="none" stroke-linecap="butt" stroke-linejoin="miter"/>
<path d="M973.3 433.5H979.7M976.5 430.3V436.7" stroke="#a5393d" stroke-width="1" fill="none"/>
<path d="M1088.7 322.9L1222.2 322.9L1222.2 486.3L1088.7 486.3Z" stroke="#ed1c24" stroke-width="5" fill="none" stroke-linecap="butt" stroke-linejoin="miter"/>
<path d="M1097.5 338.3L1155.7 338.3L1155.7 457L1097.5 457Z" stroke="#a5393d" stroke-width="2.0" fill="none" stroke-linecap="butt" stroke-linejoin="miter"/>
<path d="M1140.5 363.5L1169.5 363.5" stroke="#a5393d" stroke-width="1" fill="none" stroke-linecap="butt" stroke-linejoin="miter"/>
<path d="M1169.5 363.5L1197.5 363.5" stroke="#2f9a37" stroke-width="1" fill="none" stroke-linecap="butt" stroke-linejoin="miter"/>
<path d="M1140.5 377.5L1169.5 377.5" stroke="#a5393d" stroke-width="1" fill="none" stroke-linecap="butt" stroke-linejoin="miter"/>
<path d="M1140.5 391.5L1169.5 391.5" stroke="#a5393d" stroke-width="1" fill="none" stroke-linecap="butt" stroke-linejoin="miter"/>
<path d="M1169.5 391.5L1197.5 391.5" stroke="#2f9a37" stroke-width="1" fill="none" stroke-linecap="butt" stroke-linejoin="miter"/>
<path d="M1140.5 406.5L1169.5 406.5" stroke="#a5393d" stroke-width="1" fill="none" stroke-linecap="butt" stroke-linejoin="miter"/>
<path d="M1169.5 406.5L1197.5 406.5" stroke="#2f9a37" stroke-width="1" fill="none" stroke-linecap="butt" stroke-linejoin="miter"/>
<path d="M1140.5 420.5L1169.5 420.5" stroke="#a5393d" stroke-width="1" fill="none" stroke-linecap="butt" stroke-linejoin="miter"/>
<path d="M1169.5 420.5L1197.5 420.5" stroke="#2f9a37" stroke-width="1" fill="none" stroke-linecap="butt" stroke-linejoin="miter"/>
<path d="M1140.5 434.5L1166.5 434.5" stroke="#a5393d" stroke-width="1" fill="none" stroke-linecap="butt" stroke-linejoin="miter"/>
<path d="M1166.2 434.5H1172.8M1169.5 431.2V437.8" stroke="#a5393d" stroke-width="1" fill="none"/>
<path d="M1095.5 264.5L1112.5 264.5" stroke="#a5393d" stroke-width="1" fill="none" stroke-linecap="butt" stroke-linejoin="miter"/>
<path d="M1108.4 256.8L1096.2 264.35L1108.4 271.9" stroke="#a5393d" stroke-width="1.9" fill="none" stroke-linecap="round" stroke-linejoin="miter"/>
<path d="M1112.5 264.5L1126.5 264.5" stroke="#2f9a37" stroke-width="1" fill="none" stroke-linecap="butt" stroke-linejoin="miter"/>
<path d="M1126.5 264.5L1139.5 264.5" stroke="#a5393d" stroke-width="1" fill="none" stroke-linecap="butt" stroke-linejoin="miter"/>
<path d="M1139.9 249.2L1139.9 279" stroke="#a5393d" stroke-width="2.0" fill="none" stroke-linecap="butt" stroke-linejoin="miter"/>
<path d="M1151.4 249.4Q1140.8 264.35 1151.4 278.7" stroke="#a5393d" stroke-width="2" fill="none" stroke-linecap="round"/>
<path d="M1146.5 264.5L1169.5 264.5" stroke="#a5393d" stroke-width="1" fill="none" stroke-linecap="butt" stroke-linejoin="miter"/>
<path d="M1169.5 264.5L1183.5 264.5" stroke="#2f9a37" stroke-width="1" fill="none" stroke-linecap="butt" stroke-linejoin="miter"/>
<path d="M1183.5 264.5L1200.5 264.5" stroke="#a5393d" stroke-width="1" fill="none" stroke-linecap="butt" stroke-linejoin="miter"/>
<path d="M1196.9 252L1196.9 274.8" stroke="#a5393d" stroke-width="2.4" fill="none" stroke-linecap="butt" stroke-linejoin="miter"/>
<path d="M839.5 533.5L885.5 533.5" stroke="#2f9a37" stroke-width="1" fill="none" stroke-linecap="butt" stroke-linejoin="miter"/>
<path d="M885.5 533.5L898.5 533.5" stroke="#a5393d" stroke-width="1" fill="none" stroke-linecap="butt" stroke-linejoin="miter"/>
<path d="M898.6 533.4L900.72 527.7L904.26 539.1L907.8 527.7L911.34 539.1L914.87 527.7L918.41 539.1L921.95 527.7L925.49 539.1L926.9 533.4" stroke="#a5393d" stroke-width="2.2" fill="none" stroke-linecap="round" stroke-linejoin="round"/>
<path d="M926.5 533.5L942.5 533.5" stroke="#a5393d" stroke-width="1" fill="none" stroke-linecap="butt" stroke-linejoin="miter"/>
<path d="M942.5 533.5L970.5 533.5" stroke="#2f9a37" stroke-width="1" fill="none" stroke-linecap="butt" stroke-linejoin="miter"/>
<path d="M970.5 533.5L983.5 533.5" stroke="#a5393d" stroke-width="1" fill="none" stroke-linecap="butt" stroke-linejoin="miter"/>
<path d="M983.6 525.9L998 533.4L983.6 540.5Z" stroke="#a5393d" stroke-width="1.8" fill="none" stroke-linecap="butt" stroke-linejoin="miter"/>
<path d="M998.2 525.6L998.2 540.8" stroke="#a5393d" stroke-width="1.9" fill="none" stroke-linecap="butt" stroke-linejoin="miter"/>
<path d="M998.5 533.5L1013.5 533.5" stroke="#a5393d" stroke-width="1" fill="none" stroke-linecap="butt" stroke-linejoin="miter"/>
<path d="M1013.5 533.5L1041.5 533.5" stroke="#2f9a37" stroke-width="1" fill="none" stroke-linecap="butt" stroke-linejoin="miter"/>
<path d="M1041.5 533.5L1059.5 533.5" stroke="#a5393d" stroke-width="1" fill="none" stroke-linecap="butt" stroke-linejoin="miter"/>
<path d="M1055.2 521.4L1055.2 544.7" stroke="#a5393d" stroke-width="2.4" fill="none" stroke-linecap="butt" stroke-linejoin="miter"/>
<path d="M988.4 544.6L994.4 550" stroke="#a5393d" stroke-width="1" fill="none" stroke-linecap="butt" stroke-linejoin="miter"/>
<path d="M996.7 552.1L991.6 550.6L994.6 547.3Z" fill="#a5393d"/>
<path d="M995.2 544.6L1001.2 550" stroke="#a5393d" stroke-width="1" fill="none" stroke-linecap="butt" stroke-linejoin="miter"/>
<path d="M1003.5 552.1L998.4 550.6L1001.4 547.3Z" fill="#a5393d"/>
<path d="M478 604.5H487M488 604.5H497M487.5 595V604M487.5 605V614" stroke="#000" stroke-width="1" stroke-dasharray="1 1" fill="none"/>
</svg>
</body></html>
